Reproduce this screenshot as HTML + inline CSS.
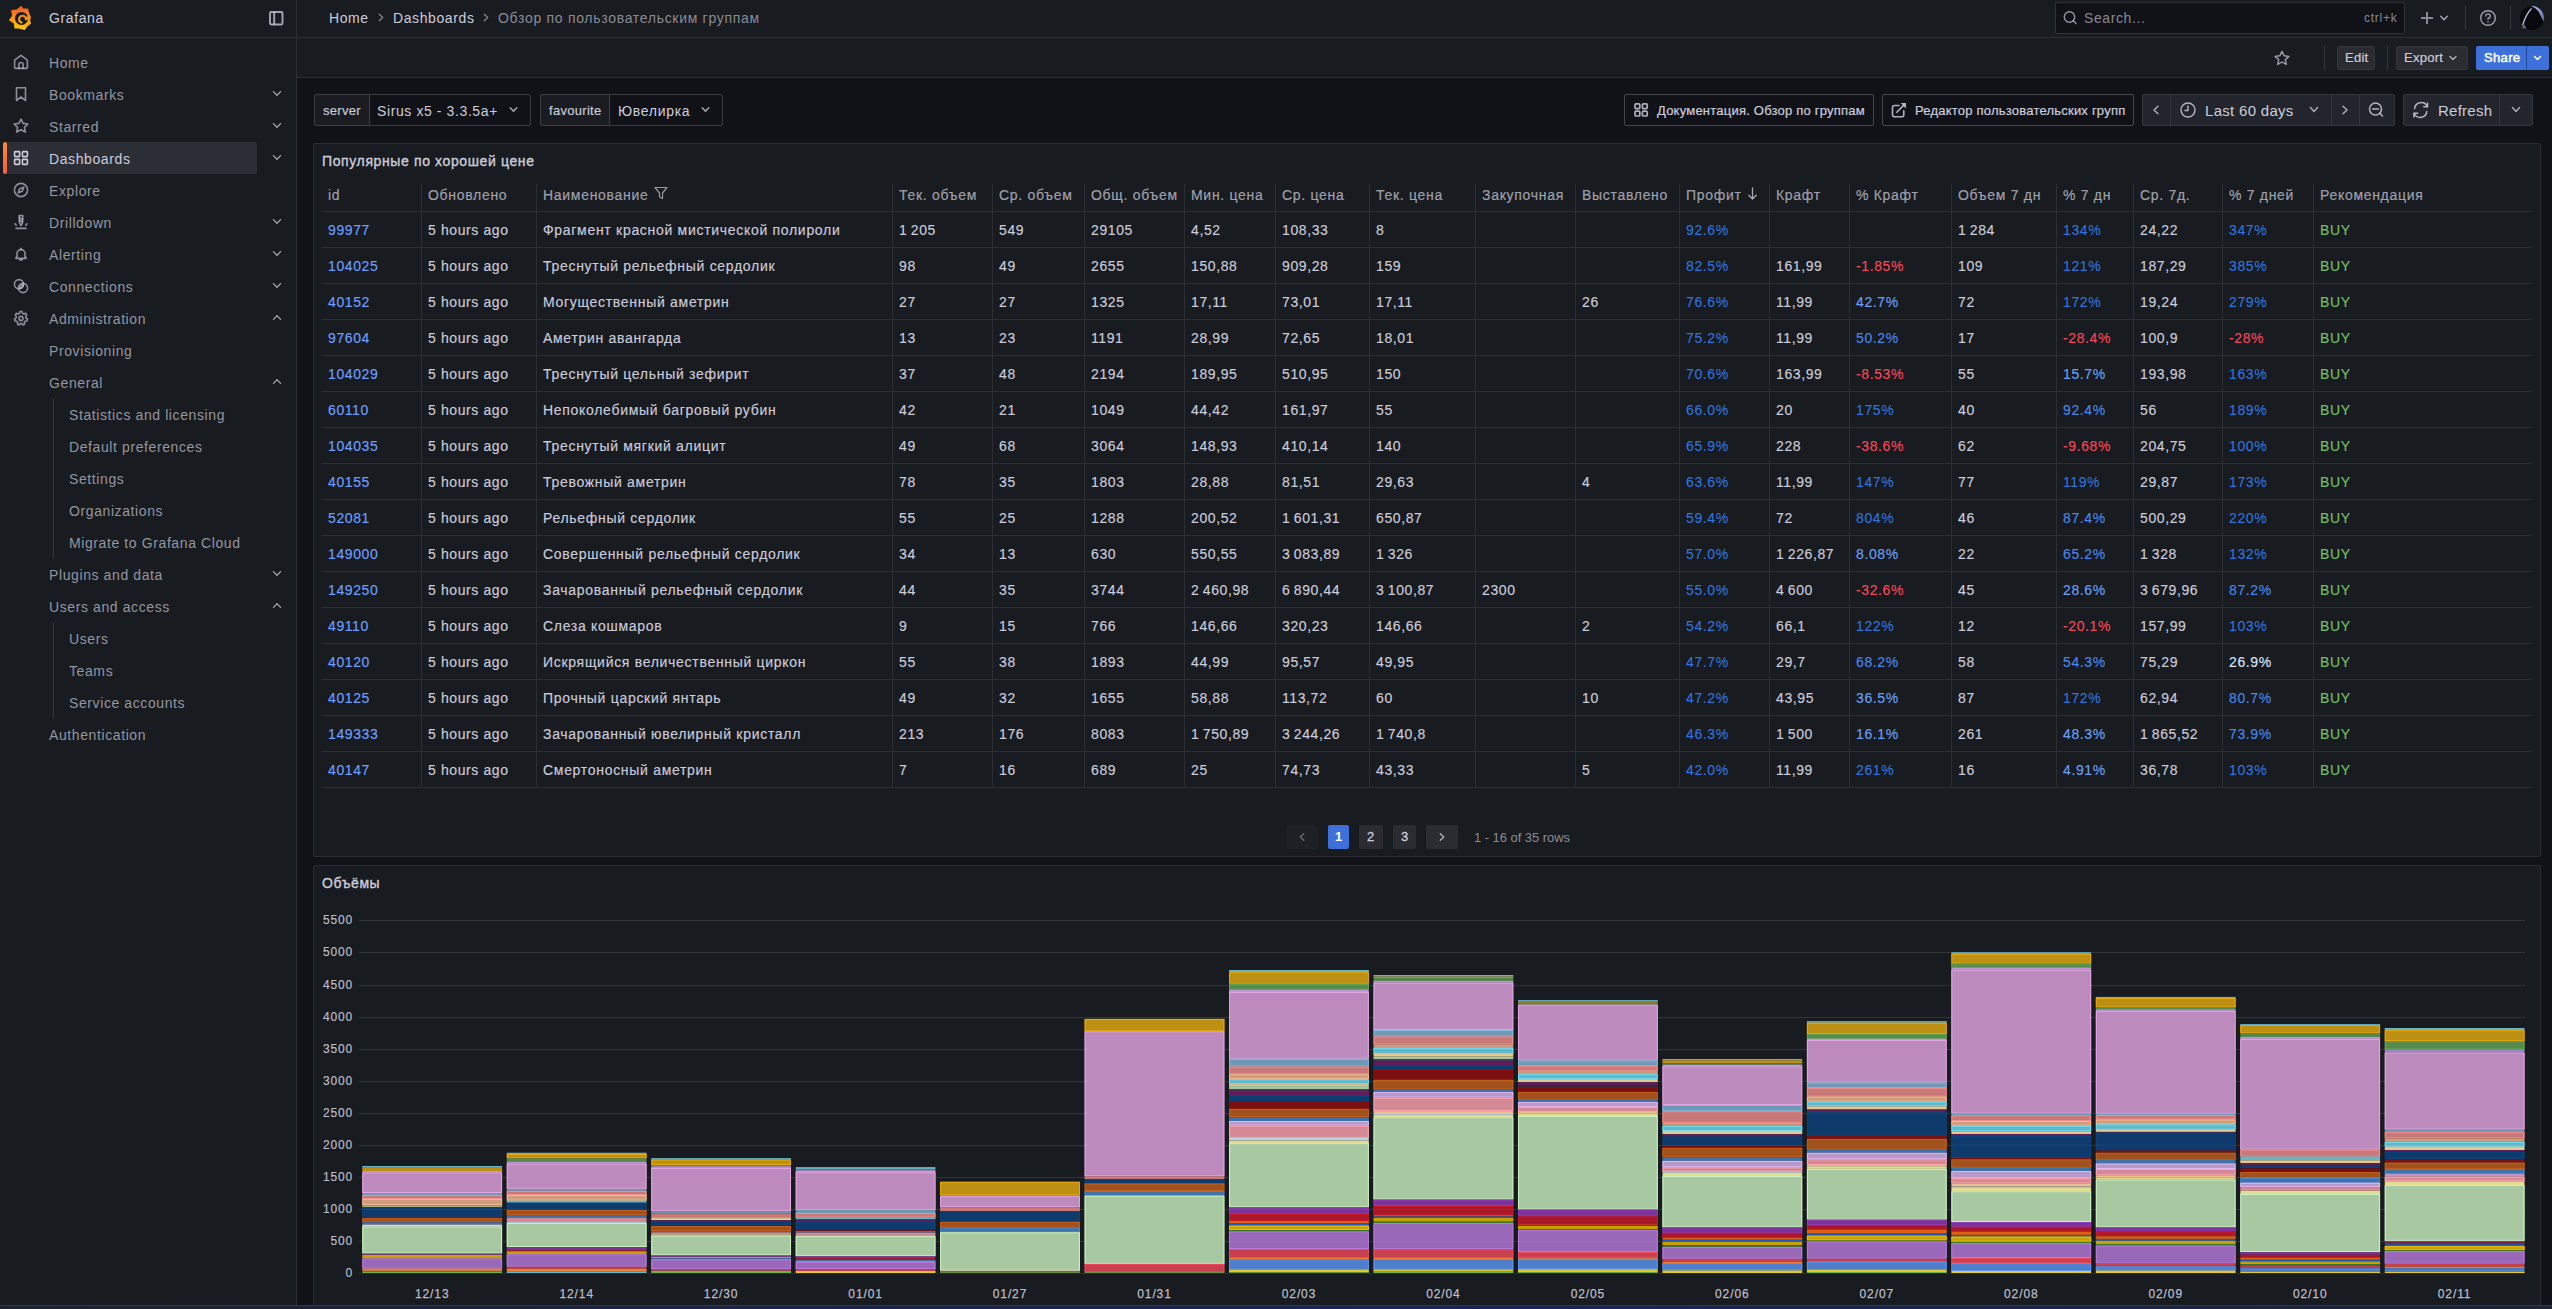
<!DOCTYPE html>
<html><head><meta charset="utf-8"><title>Grafana</title><style>
*{box-sizing:border-box;margin:0;padding:0}
html,body{width:2552px;height:1309px;overflow:hidden;background:#111217;font-family:"Liberation Sans",sans-serif;color:#ccccdc;font-size:14px}
.a{position:absolute;white-space:nowrap}
.t{position:absolute;white-space:nowrap;line-height:16px}
.sec{color:rgba(204,204,220,0.65)}
svg{display:block}
.ls{letter-spacing:0.6px}
.lc{letter-spacing:0.7px}
</style></head>
<body>
<div class="a" style="left:0px;top:0px;width:2552px;height:37px;background:#181b1f"></div><div class="a" style="left:0px;top:37px;width:2552px;height:1px;background:#2c2e33"></div><div class="a" style="left:0px;top:38px;width:296px;height:1268px;background:#181b1f"></div><div class="a" style="left:296px;top:0px;width:1px;height:1306px;background:#2c2e33"></div><div class="a" style="left:297px;top:38px;width:2255px;height:39px;background:#181b1f"></div><div class="a" style="left:297px;top:77px;width:2255px;height:1px;background:#2c2e33"></div><div class="a" style="left:0px;top:1305px;width:2552px;height:1px;background:#2f3238"></div><div class="a" style="left:0px;top:1306px;width:2552px;height:3px;background:linear-gradient(90deg,#1c2230 0%,#1a2446 30%,#182556 60%,#1c2438 100%)"></div><div class="t ls" style="left:329px;top:10px;color:#ccccdc">Home</div><svg class="a" style="left:0;top:0;overflow:visible" width="1" height="1"><path d="M379.25 14.25 L382.75 17.5 L379.25 20.75" fill="none" stroke="rgba(204,204,220,0.6)" stroke-width="1.3" stroke-linecap="round" stroke-linejoin="round"/></svg><div class="t ls" style="left:393px;top:10px;color:#ccccdc">Dashboards</div><svg class="a" style="left:0;top:0;overflow:visible" width="1" height="1"><path d="M484.25 14.25 L487.75 17.5 L484.25 20.75" fill="none" stroke="rgba(204,204,220,0.6)" stroke-width="1.3" stroke-linecap="round" stroke-linejoin="round"/></svg><div class="t lc" style="left:498px;top:10px;color:rgba(204,204,220,0.65)">Обзор по пользовательским группам</div><div class="a" style="left:2055px;top:2px;width:350px;height:32px;background:#111217;border:1px solid #2f3136;border-radius:2px"></div><svg class="a" style="left:0;top:0;overflow:visible" width="1" height="1"><circle cx="2069.5" cy="17" r="5.2" fill="none" stroke="rgba(204,204,220,0.7)" stroke-width="1.4"/><path d="M2073.3 20.8 L2076 23.5" stroke="rgba(204,204,220,0.7)" stroke-width="1.4" stroke-linecap="round"/></svg><div class="t ls" style="left:2084px;top:10px;color:rgba(204,204,220,0.65)">Search...</div><div class="t" style="left:2364px;top:10px;color:rgba(204,204,220,0.65);font-size:12px;letter-spacing:0.75px">ctrl+k</div><svg class="a" style="left:0;top:0;overflow:visible" width="1" height="1"><path d="M2427 12 V24 M2421 18 H2433" stroke="rgba(204,204,220,0.62)" stroke-width="2"/></svg><svg class="a" style="left:0;top:0;overflow:visible" width="1" height="1"><path d="M2440.75 16.25 L2444 19.75 L2447.25 16.25" fill="none" stroke="rgba(204,204,220,0.8)" stroke-width="1.4" stroke-linecap="round" stroke-linejoin="round"/></svg><div class="a" style="left:2465px;top:6px;width:1px;height:24px;background:#34363c"></div><svg class="a" style="left:0;top:0;overflow:visible" width="1" height="1"><circle cx="2488" cy="18" r="7.3" fill="none" stroke="rgba(204,204,220,0.75)" stroke-width="1.4"/><path d="M2485.8 16 A2.2 2.2 0 1 1 2488 18.3 V19.3" fill="none" stroke="rgba(204,204,220,0.75)" stroke-width="1.3" stroke-linecap="round"/><circle cx="2488" cy="21.8" r="0.8" fill="rgba(204,204,220,0.75)"/></svg><div class="a" style="left:2510px;top:6px;width:1px;height:24px;background:#34363c"></div><svg class="a" style="left:0;top:0;overflow:visible" width="1" height="1"><defs><linearGradient id="avg" x1="0" y1="0" x2="1" y2="1"><stop offset="0" stop-color="#c0c4e8"/><stop offset="1" stop-color="#5a62a0"/></linearGradient></defs><circle cx="2532" cy="18" r="12" fill="#08080d"/><path d="M2531 6.1 A12 12 0 0 1 2543.6 21.5 Q2541 17 2538.5 11.5 Q2535.5 7.5 2531 6.1Z" fill="url(#avg)"/><path d="M2522.5 25.5 Q2526 14 2531.5 8.5" fill="none" stroke="#b8bce0" stroke-width="1.3"/><path d="M2522 28 L2524.5 24.5 L2526 28.5Z" fill="#6a70a8"/></svg><svg class="a" style="left:0;top:0;overflow:visible" width="1" height="1"><path d="M2282 51.4 L2284.1 55.8 L2288.9 56.4 L2285.3 59.6 L2286.3 64.4 L2282 62 L2277.7 64.4 L2278.7 59.6 L2275.1 56.4 L2279.9 55.8 Z" fill="none" stroke="rgba(204,204,220,0.75)" stroke-width="1.4" stroke-linejoin="round"/></svg><div class="a" style="left:2324px;top:46px;width:1px;height:24px;background:#34363c"></div><div class="a" style="left:2337px;top:46px;width:38px;height:24px;background:#2a2c31;border:1px solid #34363c;border-radius:2px"></div><div class="t" style="left:2345px;top:50px;color:#ccccdc;font-size:13px;letter-spacing:0.25px;-webkit-text-stroke:0.2px #ccccdc">Edit</div><div class="a" style="left:2387px;top:46px;width:1px;height:24px;background:#34363c"></div><div class="a" style="left:2396px;top:46px;width:72px;height:24px;background:#2a2c31;border:1px solid #34363c;border-radius:2px"></div><div class="t" style="left:2404px;top:50px;color:#ccccdc;font-size:13px;letter-spacing:0.25px;-webkit-text-stroke:0.2px #ccccdc">Export</div><svg class="a" style="left:0;top:0;overflow:visible" width="1" height="1"><path d="M2450.0 56.4 L2453 59.6 L2456.0 56.4" fill="none" stroke="rgba(204,204,220,0.8)" stroke-width="1.4" stroke-linecap="round" stroke-linejoin="round"/></svg><div class="a" style="left:2476px;top:46px;width:73px;height:24px;background:#3d71d9;border-radius:2px"></div><div class="a" style="left:2526px;top:46px;width:1px;height:24px;background:#1d4a9e"></div><div class="t" style="left:2484px;top:50px;color:#ffffff;font-size:13px;letter-spacing:0.35px;-webkit-text-stroke:0.45px #ffffff">Share</div><svg class="a" style="left:0;top:0;overflow:visible" width="1" height="1"><path d="M2534.5 56.4 L2537.5 59.6 L2540.5 56.4" fill="none" stroke="#ffffff" stroke-width="1.4" stroke-linecap="round" stroke-linejoin="round"/></svg><div class="a" style="left:314px;top:94px;width:217px;height:32px;background:#111217;border:1px solid #3c3e44;border-radius:2px"></div><div class="a" style="left:314px;top:94px;width:56px;height:32px;background:#1a1c21;border:1px solid #3c3e44;border-radius:2px 0 0 2px"></div><div class="t" style="left:323px;top:103px;color:#ccccdc;font-size:13px;letter-spacing:0.3px;-webkit-text-stroke:0.15px #ccccdc">server</div><div class="t" style="left:377px;top:103px;color:#ccccdc;font-size:14px;letter-spacing:0.6px">Sirus x5 - 3.3.5a+</div><svg class="a" style="left:0;top:0;overflow:visible" width="1" height="1"><path d="M510.25 107.75 L513.5 111.25 L516.75 107.75" fill="none" stroke="rgba(204,204,220,0.8)" stroke-width="1.4" stroke-linecap="round" stroke-linejoin="round"/></svg><div class="a" style="left:540px;top:94px;width:183px;height:32px;background:#111217;border:1px solid #3c3e44;border-radius:2px"></div><div class="a" style="left:540px;top:94px;width:70px;height:32px;background:#1a1c21;border:1px solid #3c3e44;border-radius:2px 0 0 2px"></div><div class="t" style="left:549px;top:103px;color:#ccccdc;font-size:13px;letter-spacing:0.3px;-webkit-text-stroke:0.15px #ccccdc">favourite</div><div class="t" style="left:618px;top:103px;color:#ccccdc;font-size:14px;letter-spacing:0.7px">Ювелирка</div><svg class="a" style="left:0;top:0;overflow:visible" width="1" height="1"><path d="M702.25 107.75 L705.5 111.25 L708.75 107.75" fill="none" stroke="rgba(204,204,220,0.8)" stroke-width="1.4" stroke-linecap="round" stroke-linejoin="round"/></svg><div class="a" style="left:1624px;top:94px;width:250px;height:32px;background:#111217;border:1px solid #44464c;border-radius:2px"></div><svg class="a" style="left:0;top:0;overflow:visible" width="1" height="1"><g fill="none" stroke="rgba(204,204,220,0.85)" stroke-width="1.7"><rect x="1635" y="103.8" width="4.8" height="4.8" rx="1"/><rect x="1642.4" y="103.8" width="4.8" height="4.8" rx="1"/><rect x="1635" y="111.2" width="4.8" height="4.8" rx="1"/><rect x="1642.4" y="111.2" width="4.8" height="4.8" rx="1"/></g></svg><div class="t" style="left:1657px;top:103px;color:#ccccdc;font-size:13px;letter-spacing:0.22px;-webkit-text-stroke:0.2px #ccccdc">Документация. Обзор по группам</div><div class="a" style="left:1882px;top:94px;width:252px;height:32px;background:#111217;border:1px solid #44464c;border-radius:2px"></div><svg class="a" style="left:0;top:0;overflow:visible" width="1" height="1"><g fill="none" stroke="rgba(204,204,220,0.85)" stroke-width="1.6" stroke-linecap="round" stroke-linejoin="round"><path d="M1899 105.5 H1894.5 Q1892.5 105.5 1892.5 107.5 V114.8 Q1892.5 116.8 1894.5 116.8 H1901.8 Q1903.8 116.8 1903.8 114.8 V110.8"/><path d="M1896.8 112.2 L1903.6 105.4"/></g><path d="M1900.6 103 H1906 V108.4 Z" fill="rgba(204,204,220,0.85)"/></svg><div class="t" style="left:1915px;top:103px;color:#ccccdc;font-size:13px;letter-spacing:0.22px;-webkit-text-stroke:0.2px #ccccdc">Редактор пользовательских групп</div><div class="a" style="left:2142px;top:94px;width:253px;height:32px;background:#22252b;border:1px solid #34363c;border-radius:2px"></div><div class="a" style="left:2170px;top:95px;width:1px;height:30px;background:#34363c"></div><div class="a" style="left:2331px;top:95px;width:1px;height:30px;background:#34363c"></div><div class="a" style="left:2359px;top:95px;width:1px;height:30px;background:#34363c"></div><svg class="a" style="left:0;top:0;overflow:visible" width="1" height="1"><path d="M2158.0 106.25 L2154.0 110 L2158.0 113.75" fill="none" stroke="rgba(204,204,220,0.8)" stroke-width="1.5" stroke-linecap="round" stroke-linejoin="round"/></svg><svg class="a" style="left:0;top:0;overflow:visible" width="1" height="1"><circle cx="2188" cy="110" r="7" fill="none" stroke="rgba(204,204,220,0.85)" stroke-width="1.4"/><path d="M2188 106 V110.5 H2185" fill="none" stroke="rgba(204,204,220,0.85)" stroke-width="1.4" stroke-linecap="round" stroke-linejoin="round"/></svg><div class="t" style="left:2205px;top:103px;color:#ccccdc;font-size:15px;letter-spacing:0.3px">Last 60 days</div><svg class="a" style="left:0;top:0;overflow:visible" width="1" height="1"><path d="M2310.5 107.6 L2314 111.4 L2317.5 107.6" fill="none" stroke="rgba(204,204,220,0.8)" stroke-width="1.5" stroke-linecap="round" stroke-linejoin="round"/></svg><svg class="a" style="left:0;top:0;overflow:visible" width="1" height="1"><path d="M2343.0 106.25 L2347.0 110 L2343.0 113.75" fill="none" stroke="rgba(204,204,220,0.8)" stroke-width="1.5" stroke-linecap="round" stroke-linejoin="round"/></svg><svg class="a" style="left:0;top:0;overflow:visible" width="1" height="1"><circle cx="2375.5" cy="109" r="6" fill="none" stroke="rgba(204,204,220,0.85)" stroke-width="1.5"/><path d="M2379.8 113.3 L2382.5 116 M2372.5 109 H2378.5" stroke="rgba(204,204,220,0.85)" stroke-width="1.5" stroke-linecap="round"/></svg><div class="a" style="left:2403px;top:94px;width:130px;height:32px;background:#22252b;border:1px solid #34363c;border-radius:2px"></div><div class="a" style="left:2499px;top:95px;width:1px;height:30px;background:#34363c"></div><svg class="a" style="left:0;top:0;overflow:visible" width="1" height="1"><g fill="none" stroke="rgba(204,204,220,0.85)" stroke-width="1.5" stroke-linecap="round" stroke-linejoin="round"><path d="M2427.2 106.5 A6.6 6.6 0 0 0 2414.6 108.6"/><path d="M2414.2 113.5 A6.6 6.6 0 0 0 2426.8 111.4"/><path d="M2427.5 103 V106.8 H2423.7"/><path d="M2413.9 117 V113.2 H2417.7"/></g></svg><div class="t" style="left:2438px;top:103px;color:#ccccdc;font-size:15px;letter-spacing:0.25px">Refresh</div><svg class="a" style="left:0;top:0;overflow:visible" width="1" height="1"><path d="M2512.5 107.6 L2516 111.4 L2519.5 107.6" fill="none" stroke="rgba(204,204,220,0.8)" stroke-width="1.5" stroke-linecap="round" stroke-linejoin="round"/></svg><svg class="a" style="left:4px;top:2px" width="32" height="32" viewBox="0 0 32 32">
<defs><linearGradient id="lg" x1="0" y1="4" x2="0" y2="28" gradientUnits="userSpaceOnUse"><stop offset="0" stop-color="#f05a28"/><stop offset="1" stop-color="#fbca0a"/></linearGradient></defs>
<path fill="url(#lg)" d="M17.1 3.7 L19.3 6.6 L24 6.4 L25 10.5 L27 15.2 L26.2 18 L27.1 21.5 L23.2 24.4 L20.8 28.1 L14.7 26.4 L10.5 26.4 L9.8 21.5 L4.9 18.3 L8.1 13.7 L7.1 8.1 L12.7 7.6 Z"/>
<circle cx="17.5" cy="16.4" r="6.5" fill="#181b1f"/>
<path d="M21.9 17.3 A3.4 3.4 0 1 0 17.6 20.4" fill="none" stroke="url(#lg)" stroke-width="2.1" stroke-linecap="round"/>
<path d="M21.6 17.6 Q23.5 17 24.2 14.2" fill="none" stroke="url(#lg)" stroke-width="2.2"/>
</svg><div class="t ls" style="left:49px;top:10px;color:#ccccdc">Grafana</div><svg class="a" style="left:268px;top:10px" width="16" height="16" viewBox="0 0 16 16" fill="none" stroke="rgba(204,204,220,0.78)" stroke-width="1.9"><rect x="2" y="2" width="12.5" height="12.5" rx="1.2"/><path d="M6.2 2 V14.5"/></svg><div class="a" style="left:7px;top:142px;width:250px;height:32px;background:#2b2e34;border-radius:0 2px 2px 0"></div><div class="a" style="left:3px;top:142px;width:4px;height:32px;background:linear-gradient(#ff8833,#f55f3e);border-radius:2px"></div><svg class="a" style="left:13.0px;top:54.0px" width="16" height="16" viewBox="0 0 16 16" fill="none" stroke="rgba(204,204,220,0.65)" stroke-width="1.6" stroke-linecap="round" stroke-linejoin="round"><path d="M1.6 13.4 V6.9 Q1.6 6.2 2.2 5.7 L8 1.3 L13.8 5.7 Q14.4 6.2 14.4 6.9 V13.4 Q14.4 14.4 13.4 14.4 H2.6 Q1.6 14.4 1.6 13.4 Z"/><path d="M5.9 14.4 V10.6 A2.1 2.1 0 0 1 10.1 10.6 V14.4"/></svg><div class="t ls" style="left:49px;top:55px;color:rgba(204,204,220,0.70)">Home</div><svg class="a" style="left:13.0px;top:86.0px" width="16" height="16" viewBox="0 0 16 16" fill="none" stroke="rgba(204,204,220,0.65)" stroke-width="1.6" stroke-linecap="round" stroke-linejoin="round"><path d="M3.5 1.8 H12.5 V14.5 L8 11 L3.5 14.5 Z"/></svg><div class="t ls" style="left:49px;top:87px;color:rgba(204,204,220,0.70)">Bookmarks</div><svg class="a" style="left:0;top:0;overflow:visible" width="1" height="1"><path d="M273.5 91.6 L277 95.4 L280.5 91.6" fill="none" stroke="rgba(204,204,220,0.8)" stroke-width="1.3" stroke-linecap="round" stroke-linejoin="round"/></svg><svg class="a" style="left:13.0px;top:118.0px" width="16" height="16" viewBox="0 0 16 16" fill="none" stroke="rgba(204,204,220,0.65)" stroke-width="1.6" stroke-linecap="round" stroke-linejoin="round"><path d="M8 1.1 L10.1 5.4 L14.9 6 L11.4 9.3 L12.3 14 L8 11.7 L3.7 14 L4.6 9.3 L1.1 6 L5.9 5.4 Z"/></svg><div class="t ls" style="left:49px;top:119px;color:rgba(204,204,220,0.70)">Starred</div><svg class="a" style="left:0;top:0;overflow:visible" width="1" height="1"><path d="M273.5 123.6 L277 127.4 L280.5 123.6" fill="none" stroke="rgba(204,204,220,0.8)" stroke-width="1.3" stroke-linecap="round" stroke-linejoin="round"/></svg><svg class="a" style="left:13.0px;top:150.0px" width="16" height="16" viewBox="0 0 16 16" fill="none" stroke="#ccccdc" stroke-width="1.6" stroke-linecap="round" stroke-linejoin="round"><rect x="1.6" y="1.6" width="5" height="5" rx="0.6"/><rect x="9.4" y="1.6" width="5" height="5" rx="0.6"/><rect x="1.6" y="9.4" width="5" height="5" rx="0.6"/><rect x="9.4" y="9.4" width="5" height="5" rx="0.6"/></svg><div class="t ls" style="left:49px;top:151px;color:#ccccdc">Dashboards</div><svg class="a" style="left:0;top:0;overflow:visible" width="1" height="1"><path d="M273.5 155.6 L277 159.4 L280.5 155.6" fill="none" stroke="rgba(204,204,220,0.8)" stroke-width="1.3" stroke-linecap="round" stroke-linejoin="round"/></svg><svg class="a" style="left:13.0px;top:182.0px" width="16" height="16" viewBox="0 0 16 16" fill="none" stroke="rgba(204,204,220,0.65)" stroke-width="1.6" stroke-linecap="round" stroke-linejoin="round"><circle cx="8" cy="8" r="6.6"/><path d="M10.8 5.2 L9.2 9.2 L5.2 10.8 L6.8 6.8 Z"/></svg><div class="t ls" style="left:49px;top:183px;color:rgba(204,204,220,0.70)">Explore</div><svg class="a" style="left:13.0px;top:214.0px" width="16" height="16" viewBox="0 0 16 16" fill="none" stroke="rgba(204,204,220,0.65)" stroke-width="1.6" stroke-linecap="round" stroke-linejoin="round"><path d="M6.2 1.6 H9.8 L9.4 9 L8 11.6 L6.6 9 Z"/><path d="M6.3 4 L9.7 5.2 M6.4 6.6 L9.6 7.8"/><path d="M2.2 9.8 L3.2 11.4 M13.8 9.8 L12.8 11.4 M3 14.4 H13"/></svg><div class="t ls" style="left:49px;top:215px;color:rgba(204,204,220,0.70)">Drilldown</div><svg class="a" style="left:0;top:0;overflow:visible" width="1" height="1"><path d="M273.5 219.6 L277 223.4 L280.5 219.6" fill="none" stroke="rgba(204,204,220,0.8)" stroke-width="1.3" stroke-linecap="round" stroke-linejoin="round"/></svg><svg class="a" style="left:13.0px;top:246.0px" width="16" height="16" viewBox="0 0 16 16" fill="none" stroke="rgba(204,204,220,0.65)" stroke-width="1.6" stroke-linecap="round" stroke-linejoin="round"><path d="M4 11.2 V7.6 A4 4 0 0 1 12 7.6 V11.2 H13 V12.4 H3 V11.2 Z"/><path d="M6.7 13.4 A1.4 1.4 0 0 0 9.3 13.4"/><path d="M8 2.4 V3.4"/></svg><div class="t ls" style="left:49px;top:247px;color:rgba(204,204,220,0.70)">Alerting</div><svg class="a" style="left:0;top:0;overflow:visible" width="1" height="1"><path d="M273.5 251.6 L277 255.4 L280.5 251.6" fill="none" stroke="rgba(204,204,220,0.8)" stroke-width="1.3" stroke-linecap="round" stroke-linejoin="round"/></svg><svg class="a" style="left:13.0px;top:278.0px" width="16" height="16" viewBox="0 0 16 16" fill="none" stroke="rgba(204,204,220,0.65)" stroke-width="1.6" stroke-linecap="round" stroke-linejoin="round"><circle cx="6" cy="6.2" r="4.6"/><circle cx="10" cy="10" r="4.6"/><path d="M6.3 9.3 L9.3 6.3 M7.6 10.4 L10.4 7.6"/></svg><div class="t ls" style="left:49px;top:279px;color:rgba(204,204,220,0.70)">Connections</div><svg class="a" style="left:0;top:0;overflow:visible" width="1" height="1"><path d="M273.5 283.6 L277 287.4 L280.5 283.6" fill="none" stroke="rgba(204,204,220,0.8)" stroke-width="1.3" stroke-linecap="round" stroke-linejoin="round"/></svg><svg class="a" style="left:13.0px;top:310.0px" width="16" height="16" viewBox="0 0 16 16" fill="none" stroke="rgba(204,204,220,0.65)" stroke-width="1.6" stroke-linecap="round" stroke-linejoin="round"><path d="M6.9 1.5 H9.1 L9.5 3.3 L10.9 4 L12.6 3.2 L13.8 4.9 L12.7 6.4 L12.9 8 L14.5 9 L13.9 11 L12.1 11.2 L11.2 12.4 L11.6 14.2 L9.6 14.9 L8.6 13.4 H7.4 L6.4 14.9 L4.4 14.2 L4.8 12.4 L3.9 11.2 L2.1 11 L1.5 9 L3.1 8 L3.3 6.4 L2.2 4.9 L3.4 3.2 L5.1 4 L6.5 3.3 Z"/><circle cx="8" cy="8.4" r="2"/></svg><div class="t ls" style="left:49px;top:311px;color:rgba(204,204,220,0.70)">Administration</div><svg class="a" style="left:0;top:0;overflow:visible" width="1" height="1"><path d="M273.5 319.4 L277 315.6 L280.5 319.4" fill="none" stroke="rgba(204,204,220,0.8)" stroke-width="1.3" stroke-linecap="round" stroke-linejoin="round"/></svg><div class="t ls" style="left:49px;top:343px;color:rgba(204,204,220,0.70)">Provisioning</div><div class="t ls" style="left:49px;top:375px;color:rgba(204,204,220,0.70)">General</div><svg class="a" style="left:0;top:0;overflow:visible" width="1" height="1"><path d="M273.5 383.4 L277 379.6 L280.5 383.4" fill="none" stroke="rgba(204,204,220,0.8)" stroke-width="1.3" stroke-linecap="round" stroke-linejoin="round"/></svg><div class="t ls" style="left:69px;top:407px;color:rgba(204,204,220,0.70)">Statistics and licensing</div><div class="t ls" style="left:69px;top:439px;color:rgba(204,204,220,0.70)">Default preferences</div><div class="t ls" style="left:69px;top:471px;color:rgba(204,204,220,0.70)">Settings</div><div class="t ls" style="left:69px;top:503px;color:rgba(204,204,220,0.70)">Organizations</div><div class="t ls" style="left:69px;top:535px;color:rgba(204,204,220,0.70)">Migrate to Grafana Cloud</div><div class="t ls" style="left:49px;top:567px;color:rgba(204,204,220,0.70)">Plugins and data</div><svg class="a" style="left:0;top:0;overflow:visible" width="1" height="1"><path d="M273.5 571.6 L277 575.4 L280.5 571.6" fill="none" stroke="rgba(204,204,220,0.8)" stroke-width="1.3" stroke-linecap="round" stroke-linejoin="round"/></svg><div class="t ls" style="left:49px;top:599px;color:rgba(204,204,220,0.70)">Users and access</div><svg class="a" style="left:0;top:0;overflow:visible" width="1" height="1"><path d="M273.5 607.4 L277 603.6 L280.5 607.4" fill="none" stroke="rgba(204,204,220,0.8)" stroke-width="1.3" stroke-linecap="round" stroke-linejoin="round"/></svg><div class="t ls" style="left:69px;top:631px;color:rgba(204,204,220,0.70)">Users</div><div class="t ls" style="left:69px;top:663px;color:rgba(204,204,220,0.70)">Teams</div><div class="t ls" style="left:69px;top:695px;color:rgba(204,204,220,0.70)">Service accounts</div><div class="t ls" style="left:49px;top:727px;color:rgba(204,204,220,0.70)">Authentication</div><div class="a" style="left:53px;top:398px;width:1px;height:160px;background:#34363c"></div><div class="a" style="left:53px;top:622px;width:1px;height:96px;background:#34363c"></div><div class="a" style="left:313px;top:143px;width:2228px;height:714px;background:#181b1f;border:1px solid #2c2e33;border-radius:2px"></div><div class="t" style="left:322px;top:153px;color:#ccccdc;font-size:14px;letter-spacing:0.62px;-webkit-text-stroke:0.35px #ccccdc">Популярные по хорошей цене</div><div class="a" style="left:421px;top:184px;width:1px;height:604px;background:#2c2e33"></div><div class="a" style="left:536px;top:184px;width:1px;height:604px;background:#2c2e33"></div><div class="a" style="left:892px;top:184px;width:1px;height:604px;background:#2c2e33"></div><div class="a" style="left:992px;top:184px;width:1px;height:604px;background:#2c2e33"></div><div class="a" style="left:1084px;top:184px;width:1px;height:604px;background:#2c2e33"></div><div class="a" style="left:1184px;top:184px;width:1px;height:604px;background:#2c2e33"></div><div class="a" style="left:1275px;top:184px;width:1px;height:604px;background:#2c2e33"></div><div class="a" style="left:1369px;top:184px;width:1px;height:604px;background:#2c2e33"></div><div class="a" style="left:1475px;top:184px;width:1px;height:604px;background:#2c2e33"></div><div class="a" style="left:1575px;top:184px;width:1px;height:604px;background:#2c2e33"></div><div class="a" style="left:1679px;top:184px;width:1px;height:604px;background:#2c2e33"></div><div class="a" style="left:1769px;top:184px;width:1px;height:604px;background:#2c2e33"></div><div class="a" style="left:1849px;top:184px;width:1px;height:604px;background:#2c2e33"></div><div class="a" style="left:1951px;top:184px;width:1px;height:604px;background:#2c2e33"></div><div class="a" style="left:2056px;top:184px;width:1px;height:604px;background:#2c2e33"></div><div class="a" style="left:2133px;top:184px;width:1px;height:604px;background:#2c2e33"></div><div class="a" style="left:2222px;top:184px;width:1px;height:604px;background:#2c2e33"></div><div class="a" style="left:2313px;top:184px;width:1px;height:604px;background:#2c2e33"></div><div class="a" style="left:322px;top:211px;width:2210px;height:1px;background:#2c2e33"></div><div class="a" style="left:322px;top:247px;width:2210px;height:1px;background:#2c2e33"></div><div class="a" style="left:322px;top:283px;width:2210px;height:1px;background:#2c2e33"></div><div class="a" style="left:322px;top:319px;width:2210px;height:1px;background:#2c2e33"></div><div class="a" style="left:322px;top:355px;width:2210px;height:1px;background:#2c2e33"></div><div class="a" style="left:322px;top:391px;width:2210px;height:1px;background:#2c2e33"></div><div class="a" style="left:322px;top:427px;width:2210px;height:1px;background:#2c2e33"></div><div class="a" style="left:322px;top:463px;width:2210px;height:1px;background:#2c2e33"></div><div class="a" style="left:322px;top:499px;width:2210px;height:1px;background:#2c2e33"></div><div class="a" style="left:322px;top:535px;width:2210px;height:1px;background:#2c2e33"></div><div class="a" style="left:322px;top:571px;width:2210px;height:1px;background:#2c2e33"></div><div class="a" style="left:322px;top:607px;width:2210px;height:1px;background:#2c2e33"></div><div class="a" style="left:322px;top:643px;width:2210px;height:1px;background:#2c2e33"></div><div class="a" style="left:322px;top:679px;width:2210px;height:1px;background:#2c2e33"></div><div class="a" style="left:322px;top:715px;width:2210px;height:1px;background:#2c2e33"></div><div class="a" style="left:322px;top:751px;width:2210px;height:1px;background:#2c2e33"></div><div class="a" style="left:322px;top:787px;width:2210px;height:1px;background:#2c2e33"></div><div class="t lc" style="left:328px;top:187px;color:rgba(204,204,220,0.72);-webkit-text-stroke:0.22px rgba(204,204,220,0.72)">id</div><div class="t lc" style="left:428px;top:187px;color:rgba(204,204,220,0.72);-webkit-text-stroke:0.22px rgba(204,204,220,0.72)">Обновлено</div><div class="t lc" style="left:543px;top:187px;color:rgba(204,204,220,0.72);-webkit-text-stroke:0.22px rgba(204,204,220,0.72)">Наименование</div><div class="t lc" style="left:899px;top:187px;color:rgba(204,204,220,0.72);-webkit-text-stroke:0.22px rgba(204,204,220,0.72)">Тек. объем</div><div class="t lc" style="left:999px;top:187px;color:rgba(204,204,220,0.72);-webkit-text-stroke:0.22px rgba(204,204,220,0.72)">Ср. объем</div><div class="t lc" style="left:1091px;top:187px;color:rgba(204,204,220,0.72);-webkit-text-stroke:0.22px rgba(204,204,220,0.72)">Общ. объем</div><div class="t lc" style="left:1191px;top:187px;color:rgba(204,204,220,0.72);-webkit-text-stroke:0.22px rgba(204,204,220,0.72)">Мин. цена</div><div class="t lc" style="left:1282px;top:187px;color:rgba(204,204,220,0.72);-webkit-text-stroke:0.22px rgba(204,204,220,0.72)">Ср. цена</div><div class="t lc" style="left:1376px;top:187px;color:rgba(204,204,220,0.72);-webkit-text-stroke:0.22px rgba(204,204,220,0.72)">Тек. цена</div><div class="t lc" style="left:1482px;top:187px;color:rgba(204,204,220,0.72);-webkit-text-stroke:0.22px rgba(204,204,220,0.72)">Закупочная</div><div class="t lc" style="left:1582px;top:187px;color:rgba(204,204,220,0.72);-webkit-text-stroke:0.22px rgba(204,204,220,0.72)">Выставлено</div><div class="t lc" style="left:1686px;top:187px;color:rgba(204,204,220,0.72);-webkit-text-stroke:0.22px rgba(204,204,220,0.72)">Профит</div><div class="t lc" style="left:1776px;top:187px;color:rgba(204,204,220,0.72);-webkit-text-stroke:0.22px rgba(204,204,220,0.72)">Крафт</div><div class="t lc" style="left:1856px;top:187px;color:rgba(204,204,220,0.72);-webkit-text-stroke:0.22px rgba(204,204,220,0.72)">% Крафт</div><div class="t lc" style="left:1958px;top:187px;color:rgba(204,204,220,0.72);-webkit-text-stroke:0.22px rgba(204,204,220,0.72)">Объем 7 дн</div><div class="t lc" style="left:2063px;top:187px;color:rgba(204,204,220,0.72);-webkit-text-stroke:0.22px rgba(204,204,220,0.72)">% 7 дн</div><div class="t lc" style="left:2140px;top:187px;color:rgba(204,204,220,0.72);-webkit-text-stroke:0.22px rgba(204,204,220,0.72)">Ср. 7д.</div><div class="t lc" style="left:2229px;top:187px;color:rgba(204,204,220,0.72);-webkit-text-stroke:0.22px rgba(204,204,220,0.72)">% 7 дней</div><div class="t lc" style="left:2320px;top:187px;color:rgba(204,204,220,0.72);-webkit-text-stroke:0.22px rgba(204,204,220,0.72)">Рекомендация</div><svg class="a" style="left:0;top:0;overflow:visible" width="1" height="1"><path d="M655 187.5 H667 L662.5 193 V198.5 L659.5 197 V193 Z" fill="none" stroke="rgba(204,204,220,0.7)" stroke-width="1.2" stroke-linejoin="round"/></svg><svg class="a" style="left:0;top:0;overflow:visible" width="1" height="1"><path d="M1752.5 188 V199 M1748.8 195.3 L1752.5 199 L1756.2 195.3" fill="none" stroke="rgba(204,204,220,0.8)" stroke-width="1.3" stroke-linecap="round" stroke-linejoin="round"/></svg><div class="t ls" style="left:328px;top:222px;color:#6e9fff;-webkit-text-stroke:0.15px #6e9fff">99977</div><div class="t ls" style="left:428px;top:222px;color:#ccccdc;-webkit-text-stroke:0.15px #ccccdc">5 hours ago</div><div class="t lc" style="left:543px;top:222px;color:#ccccdc;-webkit-text-stroke:0.15px #ccccdc">Фрагмент красной мистической полироли</div><div class="t ls" style="left:899px;top:222px;color:#ccccdc;-webkit-text-stroke:0.15px #ccccdc">1 205</div><div class="t ls" style="left:999px;top:222px;color:#ccccdc;-webkit-text-stroke:0.15px #ccccdc">549</div><div class="t ls" style="left:1091px;top:222px;color:#ccccdc;-webkit-text-stroke:0.15px #ccccdc">29105</div><div class="t ls" style="left:1191px;top:222px;color:#ccccdc;-webkit-text-stroke:0.15px #ccccdc">4,52</div><div class="t ls" style="left:1282px;top:222px;color:#ccccdc;-webkit-text-stroke:0.15px #ccccdc">108,33</div><div class="t ls" style="left:1376px;top:222px;color:#ccccdc;-webkit-text-stroke:0.15px #ccccdc">8</div><div class="t ls" style="left:1686px;top:222px;color:#3272da;-webkit-text-stroke:0.15px #3272da">92.6%</div><div class="t ls" style="left:1958px;top:222px;color:#ccccdc;-webkit-text-stroke:0.15px #ccccdc">1 284</div><div class="t ls" style="left:2063px;top:222px;color:#3272da;-webkit-text-stroke:0.15px #3272da">134%</div><div class="t ls" style="left:2140px;top:222px;color:#ccccdc;-webkit-text-stroke:0.15px #ccccdc">24,22</div><div class="t ls" style="left:2229px;top:222px;color:#3272da;-webkit-text-stroke:0.15px #3272da">347%</div><div class="t ls" style="left:2320px;top:222px;color:#73bf69;-webkit-text-stroke:0.15px #73bf69">BUY</div><div class="t ls" style="left:328px;top:258px;color:#6e9fff;-webkit-text-stroke:0.15px #6e9fff">104025</div><div class="t ls" style="left:428px;top:258px;color:#ccccdc;-webkit-text-stroke:0.15px #ccccdc">5 hours ago</div><div class="t lc" style="left:543px;top:258px;color:#ccccdc;-webkit-text-stroke:0.15px #ccccdc">Треснутый рельефный сердолик</div><div class="t ls" style="left:899px;top:258px;color:#ccccdc;-webkit-text-stroke:0.15px #ccccdc">98</div><div class="t ls" style="left:999px;top:258px;color:#ccccdc;-webkit-text-stroke:0.15px #ccccdc">49</div><div class="t ls" style="left:1091px;top:258px;color:#ccccdc;-webkit-text-stroke:0.15px #ccccdc">2655</div><div class="t ls" style="left:1191px;top:258px;color:#ccccdc;-webkit-text-stroke:0.15px #ccccdc">150,88</div><div class="t ls" style="left:1282px;top:258px;color:#ccccdc;-webkit-text-stroke:0.15px #ccccdc">909,28</div><div class="t ls" style="left:1376px;top:258px;color:#ccccdc;-webkit-text-stroke:0.15px #ccccdc">159</div><div class="t ls" style="left:1686px;top:258px;color:#3272da;-webkit-text-stroke:0.15px #3272da">82.5%</div><div class="t ls" style="left:1776px;top:258px;color:#ccccdc;-webkit-text-stroke:0.15px #ccccdc">161,99</div><div class="t ls" style="left:1856px;top:258px;color:#f2495c;-webkit-text-stroke:0.15px #f2495c">-1.85%</div><div class="t ls" style="left:1958px;top:258px;color:#ccccdc;-webkit-text-stroke:0.15px #ccccdc">109</div><div class="t ls" style="left:2063px;top:258px;color:#3272da;-webkit-text-stroke:0.15px #3272da">121%</div><div class="t ls" style="left:2140px;top:258px;color:#ccccdc;-webkit-text-stroke:0.15px #ccccdc">187,29</div><div class="t ls" style="left:2229px;top:258px;color:#3272da;-webkit-text-stroke:0.15px #3272da">385%</div><div class="t ls" style="left:2320px;top:258px;color:#73bf69;-webkit-text-stroke:0.15px #73bf69">BUY</div><div class="t ls" style="left:328px;top:294px;color:#6e9fff;-webkit-text-stroke:0.15px #6e9fff">40152</div><div class="t ls" style="left:428px;top:294px;color:#ccccdc;-webkit-text-stroke:0.15px #ccccdc">5 hours ago</div><div class="t lc" style="left:543px;top:294px;color:#ccccdc;-webkit-text-stroke:0.15px #ccccdc">Могущественный аметрин</div><div class="t ls" style="left:899px;top:294px;color:#ccccdc;-webkit-text-stroke:0.15px #ccccdc">27</div><div class="t ls" style="left:999px;top:294px;color:#ccccdc;-webkit-text-stroke:0.15px #ccccdc">27</div><div class="t ls" style="left:1091px;top:294px;color:#ccccdc;-webkit-text-stroke:0.15px #ccccdc">1325</div><div class="t ls" style="left:1191px;top:294px;color:#ccccdc;-webkit-text-stroke:0.15px #ccccdc">17,11</div><div class="t ls" style="left:1282px;top:294px;color:#ccccdc;-webkit-text-stroke:0.15px #ccccdc">73,01</div><div class="t ls" style="left:1376px;top:294px;color:#ccccdc;-webkit-text-stroke:0.15px #ccccdc">17,11</div><div class="t ls" style="left:1582px;top:294px;color:#ccccdc;-webkit-text-stroke:0.15px #ccccdc">26</div><div class="t ls" style="left:1686px;top:294px;color:#3272da;-webkit-text-stroke:0.15px #3272da">76.6%</div><div class="t ls" style="left:1776px;top:294px;color:#ccccdc;-webkit-text-stroke:0.15px #ccccdc">11,99</div><div class="t ls" style="left:1856px;top:294px;color:#6ba0f5;-webkit-text-stroke:0.15px #6ba0f5">42.7%</div><div class="t ls" style="left:1958px;top:294px;color:#ccccdc;-webkit-text-stroke:0.15px #ccccdc">72</div><div class="t ls" style="left:2063px;top:294px;color:#3272da;-webkit-text-stroke:0.15px #3272da">172%</div><div class="t ls" style="left:2140px;top:294px;color:#ccccdc;-webkit-text-stroke:0.15px #ccccdc">19,24</div><div class="t ls" style="left:2229px;top:294px;color:#3272da;-webkit-text-stroke:0.15px #3272da">279%</div><div class="t ls" style="left:2320px;top:294px;color:#73bf69;-webkit-text-stroke:0.15px #73bf69">BUY</div><div class="t ls" style="left:328px;top:330px;color:#6e9fff;-webkit-text-stroke:0.15px #6e9fff">97604</div><div class="t ls" style="left:428px;top:330px;color:#ccccdc;-webkit-text-stroke:0.15px #ccccdc">5 hours ago</div><div class="t lc" style="left:543px;top:330px;color:#ccccdc;-webkit-text-stroke:0.15px #ccccdc">Аметрин авангарда</div><div class="t ls" style="left:899px;top:330px;color:#ccccdc;-webkit-text-stroke:0.15px #ccccdc">13</div><div class="t ls" style="left:999px;top:330px;color:#ccccdc;-webkit-text-stroke:0.15px #ccccdc">23</div><div class="t ls" style="left:1091px;top:330px;color:#ccccdc;-webkit-text-stroke:0.15px #ccccdc">1191</div><div class="t ls" style="left:1191px;top:330px;color:#ccccdc;-webkit-text-stroke:0.15px #ccccdc">28,99</div><div class="t ls" style="left:1282px;top:330px;color:#ccccdc;-webkit-text-stroke:0.15px #ccccdc">72,65</div><div class="t ls" style="left:1376px;top:330px;color:#ccccdc;-webkit-text-stroke:0.15px #ccccdc">18,01</div><div class="t ls" style="left:1686px;top:330px;color:#3272da;-webkit-text-stroke:0.15px #3272da">75.2%</div><div class="t ls" style="left:1776px;top:330px;color:#ccccdc;-webkit-text-stroke:0.15px #ccccdc">11,99</div><div class="t ls" style="left:1856px;top:330px;color:#4a86ea;-webkit-text-stroke:0.15px #4a86ea">50.2%</div><div class="t ls" style="left:1958px;top:330px;color:#ccccdc;-webkit-text-stroke:0.15px #ccccdc">17</div><div class="t ls" style="left:2063px;top:330px;color:#f2495c;-webkit-text-stroke:0.15px #f2495c">-28.4%</div><div class="t ls" style="left:2140px;top:330px;color:#ccccdc;-webkit-text-stroke:0.15px #ccccdc">100,9</div><div class="t ls" style="left:2229px;top:330px;color:#f2495c;-webkit-text-stroke:0.15px #f2495c">-28%</div><div class="t ls" style="left:2320px;top:330px;color:#73bf69;-webkit-text-stroke:0.15px #73bf69">BUY</div><div class="t ls" style="left:328px;top:366px;color:#6e9fff;-webkit-text-stroke:0.15px #6e9fff">104029</div><div class="t ls" style="left:428px;top:366px;color:#ccccdc;-webkit-text-stroke:0.15px #ccccdc">5 hours ago</div><div class="t lc" style="left:543px;top:366px;color:#ccccdc;-webkit-text-stroke:0.15px #ccccdc">Треснутый цельный зефирит</div><div class="t ls" style="left:899px;top:366px;color:#ccccdc;-webkit-text-stroke:0.15px #ccccdc">37</div><div class="t ls" style="left:999px;top:366px;color:#ccccdc;-webkit-text-stroke:0.15px #ccccdc">48</div><div class="t ls" style="left:1091px;top:366px;color:#ccccdc;-webkit-text-stroke:0.15px #ccccdc">2194</div><div class="t ls" style="left:1191px;top:366px;color:#ccccdc;-webkit-text-stroke:0.15px #ccccdc">189,95</div><div class="t ls" style="left:1282px;top:366px;color:#ccccdc;-webkit-text-stroke:0.15px #ccccdc">510,95</div><div class="t ls" style="left:1376px;top:366px;color:#ccccdc;-webkit-text-stroke:0.15px #ccccdc">150</div><div class="t ls" style="left:1686px;top:366px;color:#3272da;-webkit-text-stroke:0.15px #3272da">70.6%</div><div class="t ls" style="left:1776px;top:366px;color:#ccccdc;-webkit-text-stroke:0.15px #ccccdc">163,99</div><div class="t ls" style="left:1856px;top:366px;color:#f2495c;-webkit-text-stroke:0.15px #f2495c">-8.53%</div><div class="t ls" style="left:1958px;top:366px;color:#ccccdc;-webkit-text-stroke:0.15px #ccccdc">55</div><div class="t ls" style="left:2063px;top:366px;color:#6ba0f5;-webkit-text-stroke:0.15px #6ba0f5">15.7%</div><div class="t ls" style="left:2140px;top:366px;color:#ccccdc;-webkit-text-stroke:0.15px #ccccdc">193,98</div><div class="t ls" style="left:2229px;top:366px;color:#3272da;-webkit-text-stroke:0.15px #3272da">163%</div><div class="t ls" style="left:2320px;top:366px;color:#73bf69;-webkit-text-stroke:0.15px #73bf69">BUY</div><div class="t ls" style="left:328px;top:402px;color:#6e9fff;-webkit-text-stroke:0.15px #6e9fff">60110</div><div class="t ls" style="left:428px;top:402px;color:#ccccdc;-webkit-text-stroke:0.15px #ccccdc">5 hours ago</div><div class="t lc" style="left:543px;top:402px;color:#ccccdc;-webkit-text-stroke:0.15px #ccccdc">Непоколебимый багровый рубин</div><div class="t ls" style="left:899px;top:402px;color:#ccccdc;-webkit-text-stroke:0.15px #ccccdc">42</div><div class="t ls" style="left:999px;top:402px;color:#ccccdc;-webkit-text-stroke:0.15px #ccccdc">21</div><div class="t ls" style="left:1091px;top:402px;color:#ccccdc;-webkit-text-stroke:0.15px #ccccdc">1049</div><div class="t ls" style="left:1191px;top:402px;color:#ccccdc;-webkit-text-stroke:0.15px #ccccdc">44,42</div><div class="t ls" style="left:1282px;top:402px;color:#ccccdc;-webkit-text-stroke:0.15px #ccccdc">161,97</div><div class="t ls" style="left:1376px;top:402px;color:#ccccdc;-webkit-text-stroke:0.15px #ccccdc">55</div><div class="t ls" style="left:1686px;top:402px;color:#3272da;-webkit-text-stroke:0.15px #3272da">66.0%</div><div class="t ls" style="left:1776px;top:402px;color:#ccccdc;-webkit-text-stroke:0.15px #ccccdc">20</div><div class="t ls" style="left:1856px;top:402px;color:#3272da;-webkit-text-stroke:0.15px #3272da">175%</div><div class="t ls" style="left:1958px;top:402px;color:#ccccdc;-webkit-text-stroke:0.15px #ccccdc">40</div><div class="t ls" style="left:2063px;top:402px;color:#4a86ea;-webkit-text-stroke:0.15px #4a86ea">92.4%</div><div class="t ls" style="left:2140px;top:402px;color:#ccccdc;-webkit-text-stroke:0.15px #ccccdc">56</div><div class="t ls" style="left:2229px;top:402px;color:#3272da;-webkit-text-stroke:0.15px #3272da">189%</div><div class="t ls" style="left:2320px;top:402px;color:#73bf69;-webkit-text-stroke:0.15px #73bf69">BUY</div><div class="t ls" style="left:328px;top:438px;color:#6e9fff;-webkit-text-stroke:0.15px #6e9fff">104035</div><div class="t ls" style="left:428px;top:438px;color:#ccccdc;-webkit-text-stroke:0.15px #ccccdc">5 hours ago</div><div class="t lc" style="left:543px;top:438px;color:#ccccdc;-webkit-text-stroke:0.15px #ccccdc">Треснутый мягкий алицит</div><div class="t ls" style="left:899px;top:438px;color:#ccccdc;-webkit-text-stroke:0.15px #ccccdc">49</div><div class="t ls" style="left:999px;top:438px;color:#ccccdc;-webkit-text-stroke:0.15px #ccccdc">68</div><div class="t ls" style="left:1091px;top:438px;color:#ccccdc;-webkit-text-stroke:0.15px #ccccdc">3064</div><div class="t ls" style="left:1191px;top:438px;color:#ccccdc;-webkit-text-stroke:0.15px #ccccdc">148,93</div><div class="t ls" style="left:1282px;top:438px;color:#ccccdc;-webkit-text-stroke:0.15px #ccccdc">410,14</div><div class="t ls" style="left:1376px;top:438px;color:#ccccdc;-webkit-text-stroke:0.15px #ccccdc">140</div><div class="t ls" style="left:1686px;top:438px;color:#3272da;-webkit-text-stroke:0.15px #3272da">65.9%</div><div class="t ls" style="left:1776px;top:438px;color:#ccccdc;-webkit-text-stroke:0.15px #ccccdc">228</div><div class="t ls" style="left:1856px;top:438px;color:#f2495c;-webkit-text-stroke:0.15px #f2495c">-38.6%</div><div class="t ls" style="left:1958px;top:438px;color:#ccccdc;-webkit-text-stroke:0.15px #ccccdc">62</div><div class="t ls" style="left:2063px;top:438px;color:#f2495c;-webkit-text-stroke:0.15px #f2495c">-9.68%</div><div class="t ls" style="left:2140px;top:438px;color:#ccccdc;-webkit-text-stroke:0.15px #ccccdc">204,75</div><div class="t ls" style="left:2229px;top:438px;color:#3272da;-webkit-text-stroke:0.15px #3272da">100%</div><div class="t ls" style="left:2320px;top:438px;color:#73bf69;-webkit-text-stroke:0.15px #73bf69">BUY</div><div class="t ls" style="left:328px;top:474px;color:#6e9fff;-webkit-text-stroke:0.15px #6e9fff">40155</div><div class="t ls" style="left:428px;top:474px;color:#ccccdc;-webkit-text-stroke:0.15px #ccccdc">5 hours ago</div><div class="t lc" style="left:543px;top:474px;color:#ccccdc;-webkit-text-stroke:0.15px #ccccdc">Тревожный аметрин</div><div class="t ls" style="left:899px;top:474px;color:#ccccdc;-webkit-text-stroke:0.15px #ccccdc">78</div><div class="t ls" style="left:999px;top:474px;color:#ccccdc;-webkit-text-stroke:0.15px #ccccdc">35</div><div class="t ls" style="left:1091px;top:474px;color:#ccccdc;-webkit-text-stroke:0.15px #ccccdc">1803</div><div class="t ls" style="left:1191px;top:474px;color:#ccccdc;-webkit-text-stroke:0.15px #ccccdc">28,88</div><div class="t ls" style="left:1282px;top:474px;color:#ccccdc;-webkit-text-stroke:0.15px #ccccdc">81,51</div><div class="t ls" style="left:1376px;top:474px;color:#ccccdc;-webkit-text-stroke:0.15px #ccccdc">29,63</div><div class="t ls" style="left:1582px;top:474px;color:#ccccdc;-webkit-text-stroke:0.15px #ccccdc">4</div><div class="t ls" style="left:1686px;top:474px;color:#3272da;-webkit-text-stroke:0.15px #3272da">63.6%</div><div class="t ls" style="left:1776px;top:474px;color:#ccccdc;-webkit-text-stroke:0.15px #ccccdc">11,99</div><div class="t ls" style="left:1856px;top:474px;color:#3272da;-webkit-text-stroke:0.15px #3272da">147%</div><div class="t ls" style="left:1958px;top:474px;color:#ccccdc;-webkit-text-stroke:0.15px #ccccdc">77</div><div class="t ls" style="left:2063px;top:474px;color:#3272da;-webkit-text-stroke:0.15px #3272da">119%</div><div class="t ls" style="left:2140px;top:474px;color:#ccccdc;-webkit-text-stroke:0.15px #ccccdc">29,87</div><div class="t ls" style="left:2229px;top:474px;color:#3272da;-webkit-text-stroke:0.15px #3272da">173%</div><div class="t ls" style="left:2320px;top:474px;color:#73bf69;-webkit-text-stroke:0.15px #73bf69">BUY</div><div class="t ls" style="left:328px;top:510px;color:#6e9fff;-webkit-text-stroke:0.15px #6e9fff">52081</div><div class="t ls" style="left:428px;top:510px;color:#ccccdc;-webkit-text-stroke:0.15px #ccccdc">5 hours ago</div><div class="t lc" style="left:543px;top:510px;color:#ccccdc;-webkit-text-stroke:0.15px #ccccdc">Рельефный сердолик</div><div class="t ls" style="left:899px;top:510px;color:#ccccdc;-webkit-text-stroke:0.15px #ccccdc">55</div><div class="t ls" style="left:999px;top:510px;color:#ccccdc;-webkit-text-stroke:0.15px #ccccdc">25</div><div class="t ls" style="left:1091px;top:510px;color:#ccccdc;-webkit-text-stroke:0.15px #ccccdc">1288</div><div class="t ls" style="left:1191px;top:510px;color:#ccccdc;-webkit-text-stroke:0.15px #ccccdc">200,52</div><div class="t ls" style="left:1282px;top:510px;color:#ccccdc;-webkit-text-stroke:0.15px #ccccdc">1 601,31</div><div class="t ls" style="left:1376px;top:510px;color:#ccccdc;-webkit-text-stroke:0.15px #ccccdc">650,87</div><div class="t ls" style="left:1686px;top:510px;color:#3272da;-webkit-text-stroke:0.15px #3272da">59.4%</div><div class="t ls" style="left:1776px;top:510px;color:#ccccdc;-webkit-text-stroke:0.15px #ccccdc">72</div><div class="t ls" style="left:1856px;top:510px;color:#3272da;-webkit-text-stroke:0.15px #3272da">804%</div><div class="t ls" style="left:1958px;top:510px;color:#ccccdc;-webkit-text-stroke:0.15px #ccccdc">46</div><div class="t ls" style="left:2063px;top:510px;color:#4a86ea;-webkit-text-stroke:0.15px #4a86ea">87.4%</div><div class="t ls" style="left:2140px;top:510px;color:#ccccdc;-webkit-text-stroke:0.15px #ccccdc">500,29</div><div class="t ls" style="left:2229px;top:510px;color:#3272da;-webkit-text-stroke:0.15px #3272da">220%</div><div class="t ls" style="left:2320px;top:510px;color:#73bf69;-webkit-text-stroke:0.15px #73bf69">BUY</div><div class="t ls" style="left:328px;top:546px;color:#6e9fff;-webkit-text-stroke:0.15px #6e9fff">149000</div><div class="t ls" style="left:428px;top:546px;color:#ccccdc;-webkit-text-stroke:0.15px #ccccdc">5 hours ago</div><div class="t lc" style="left:543px;top:546px;color:#ccccdc;-webkit-text-stroke:0.15px #ccccdc">Совершенный рельефный сердолик</div><div class="t ls" style="left:899px;top:546px;color:#ccccdc;-webkit-text-stroke:0.15px #ccccdc">34</div><div class="t ls" style="left:999px;top:546px;color:#ccccdc;-webkit-text-stroke:0.15px #ccccdc">13</div><div class="t ls" style="left:1091px;top:546px;color:#ccccdc;-webkit-text-stroke:0.15px #ccccdc">630</div><div class="t ls" style="left:1191px;top:546px;color:#ccccdc;-webkit-text-stroke:0.15px #ccccdc">550,55</div><div class="t ls" style="left:1282px;top:546px;color:#ccccdc;-webkit-text-stroke:0.15px #ccccdc">3 083,89</div><div class="t ls" style="left:1376px;top:546px;color:#ccccdc;-webkit-text-stroke:0.15px #ccccdc">1 326</div><div class="t ls" style="left:1686px;top:546px;color:#3272da;-webkit-text-stroke:0.15px #3272da">57.0%</div><div class="t ls" style="left:1776px;top:546px;color:#ccccdc;-webkit-text-stroke:0.15px #ccccdc">1 226,87</div><div class="t ls" style="left:1856px;top:546px;color:#6ba0f5;-webkit-text-stroke:0.15px #6ba0f5">8.08%</div><div class="t ls" style="left:1958px;top:546px;color:#ccccdc;-webkit-text-stroke:0.15px #ccccdc">22</div><div class="t ls" style="left:2063px;top:546px;color:#4a86ea;-webkit-text-stroke:0.15px #4a86ea">65.2%</div><div class="t ls" style="left:2140px;top:546px;color:#ccccdc;-webkit-text-stroke:0.15px #ccccdc">1 328</div><div class="t ls" style="left:2229px;top:546px;color:#3272da;-webkit-text-stroke:0.15px #3272da">132%</div><div class="t ls" style="left:2320px;top:546px;color:#73bf69;-webkit-text-stroke:0.15px #73bf69">BUY</div><div class="t ls" style="left:328px;top:582px;color:#6e9fff;-webkit-text-stroke:0.15px #6e9fff">149250</div><div class="t ls" style="left:428px;top:582px;color:#ccccdc;-webkit-text-stroke:0.15px #ccccdc">5 hours ago</div><div class="t lc" style="left:543px;top:582px;color:#ccccdc;-webkit-text-stroke:0.15px #ccccdc">Зачарованный рельефный сердолик</div><div class="t ls" style="left:899px;top:582px;color:#ccccdc;-webkit-text-stroke:0.15px #ccccdc">44</div><div class="t ls" style="left:999px;top:582px;color:#ccccdc;-webkit-text-stroke:0.15px #ccccdc">35</div><div class="t ls" style="left:1091px;top:582px;color:#ccccdc;-webkit-text-stroke:0.15px #ccccdc">3744</div><div class="t ls" style="left:1191px;top:582px;color:#ccccdc;-webkit-text-stroke:0.15px #ccccdc">2 460,98</div><div class="t ls" style="left:1282px;top:582px;color:#ccccdc;-webkit-text-stroke:0.15px #ccccdc">6 890,44</div><div class="t ls" style="left:1376px;top:582px;color:#ccccdc;-webkit-text-stroke:0.15px #ccccdc">3 100,87</div><div class="t ls" style="left:1482px;top:582px;color:#ccccdc;-webkit-text-stroke:0.15px #ccccdc">2300</div><div class="t ls" style="left:1686px;top:582px;color:#3272da;-webkit-text-stroke:0.15px #3272da">55.0%</div><div class="t ls" style="left:1776px;top:582px;color:#ccccdc;-webkit-text-stroke:0.15px #ccccdc">4 600</div><div class="t ls" style="left:1856px;top:582px;color:#f2495c;-webkit-text-stroke:0.15px #f2495c">-32.6%</div><div class="t ls" style="left:1958px;top:582px;color:#ccccdc;-webkit-text-stroke:0.15px #ccccdc">45</div><div class="t ls" style="left:2063px;top:582px;color:#6ba0f5;-webkit-text-stroke:0.15px #6ba0f5">28.6%</div><div class="t ls" style="left:2140px;top:582px;color:#ccccdc;-webkit-text-stroke:0.15px #ccccdc">3 679,96</div><div class="t ls" style="left:2229px;top:582px;color:#4a86ea;-webkit-text-stroke:0.15px #4a86ea">87.2%</div><div class="t ls" style="left:2320px;top:582px;color:#73bf69;-webkit-text-stroke:0.15px #73bf69">BUY</div><div class="t ls" style="left:328px;top:618px;color:#6e9fff;-webkit-text-stroke:0.15px #6e9fff">49110</div><div class="t ls" style="left:428px;top:618px;color:#ccccdc;-webkit-text-stroke:0.15px #ccccdc">5 hours ago</div><div class="t lc" style="left:543px;top:618px;color:#ccccdc;-webkit-text-stroke:0.15px #ccccdc">Слеза кошмаров</div><div class="t ls" style="left:899px;top:618px;color:#ccccdc;-webkit-text-stroke:0.15px #ccccdc">9</div><div class="t ls" style="left:999px;top:618px;color:#ccccdc;-webkit-text-stroke:0.15px #ccccdc">15</div><div class="t ls" style="left:1091px;top:618px;color:#ccccdc;-webkit-text-stroke:0.15px #ccccdc">766</div><div class="t ls" style="left:1191px;top:618px;color:#ccccdc;-webkit-text-stroke:0.15px #ccccdc">146,66</div><div class="t ls" style="left:1282px;top:618px;color:#ccccdc;-webkit-text-stroke:0.15px #ccccdc">320,23</div><div class="t ls" style="left:1376px;top:618px;color:#ccccdc;-webkit-text-stroke:0.15px #ccccdc">146,66</div><div class="t ls" style="left:1582px;top:618px;color:#ccccdc;-webkit-text-stroke:0.15px #ccccdc">2</div><div class="t ls" style="left:1686px;top:618px;color:#3272da;-webkit-text-stroke:0.15px #3272da">54.2%</div><div class="t ls" style="left:1776px;top:618px;color:#ccccdc;-webkit-text-stroke:0.15px #ccccdc">66,1</div><div class="t ls" style="left:1856px;top:618px;color:#3272da;-webkit-text-stroke:0.15px #3272da">122%</div><div class="t ls" style="left:1958px;top:618px;color:#ccccdc;-webkit-text-stroke:0.15px #ccccdc">12</div><div class="t ls" style="left:2063px;top:618px;color:#f2495c;-webkit-text-stroke:0.15px #f2495c">-20.1%</div><div class="t ls" style="left:2140px;top:618px;color:#ccccdc;-webkit-text-stroke:0.15px #ccccdc">157,99</div><div class="t ls" style="left:2229px;top:618px;color:#3272da;-webkit-text-stroke:0.15px #3272da">103%</div><div class="t ls" style="left:2320px;top:618px;color:#73bf69;-webkit-text-stroke:0.15px #73bf69">BUY</div><div class="t ls" style="left:328px;top:654px;color:#6e9fff;-webkit-text-stroke:0.15px #6e9fff">40120</div><div class="t ls" style="left:428px;top:654px;color:#ccccdc;-webkit-text-stroke:0.15px #ccccdc">5 hours ago</div><div class="t lc" style="left:543px;top:654px;color:#ccccdc;-webkit-text-stroke:0.15px #ccccdc">Искрящийся величественный циркон</div><div class="t ls" style="left:899px;top:654px;color:#ccccdc;-webkit-text-stroke:0.15px #ccccdc">55</div><div class="t ls" style="left:999px;top:654px;color:#ccccdc;-webkit-text-stroke:0.15px #ccccdc">38</div><div class="t ls" style="left:1091px;top:654px;color:#ccccdc;-webkit-text-stroke:0.15px #ccccdc">1893</div><div class="t ls" style="left:1191px;top:654px;color:#ccccdc;-webkit-text-stroke:0.15px #ccccdc">44,99</div><div class="t ls" style="left:1282px;top:654px;color:#ccccdc;-webkit-text-stroke:0.15px #ccccdc">95,57</div><div class="t ls" style="left:1376px;top:654px;color:#ccccdc;-webkit-text-stroke:0.15px #ccccdc">49,95</div><div class="t ls" style="left:1686px;top:654px;color:#3272da;-webkit-text-stroke:0.15px #3272da">47.7%</div><div class="t ls" style="left:1776px;top:654px;color:#ccccdc;-webkit-text-stroke:0.15px #ccccdc">29,7</div><div class="t ls" style="left:1856px;top:654px;color:#4a86ea;-webkit-text-stroke:0.15px #4a86ea">68.2%</div><div class="t ls" style="left:1958px;top:654px;color:#ccccdc;-webkit-text-stroke:0.15px #ccccdc">58</div><div class="t ls" style="left:2063px;top:654px;color:#4a86ea;-webkit-text-stroke:0.15px #4a86ea">54.3%</div><div class="t ls" style="left:2140px;top:654px;color:#ccccdc;-webkit-text-stroke:0.15px #ccccdc">75,29</div><div class="t ls" style="left:2229px;top:654px;color:#d8e4fb;-webkit-text-stroke:0.15px #d8e4fb">26.9%</div><div class="t ls" style="left:2320px;top:654px;color:#73bf69;-webkit-text-stroke:0.15px #73bf69">BUY</div><div class="t ls" style="left:328px;top:690px;color:#6e9fff;-webkit-text-stroke:0.15px #6e9fff">40125</div><div class="t ls" style="left:428px;top:690px;color:#ccccdc;-webkit-text-stroke:0.15px #ccccdc">5 hours ago</div><div class="t lc" style="left:543px;top:690px;color:#ccccdc;-webkit-text-stroke:0.15px #ccccdc">Прочный царский янтарь</div><div class="t ls" style="left:899px;top:690px;color:#ccccdc;-webkit-text-stroke:0.15px #ccccdc">49</div><div class="t ls" style="left:999px;top:690px;color:#ccccdc;-webkit-text-stroke:0.15px #ccccdc">32</div><div class="t ls" style="left:1091px;top:690px;color:#ccccdc;-webkit-text-stroke:0.15px #ccccdc">1655</div><div class="t ls" style="left:1191px;top:690px;color:#ccccdc;-webkit-text-stroke:0.15px #ccccdc">58,88</div><div class="t ls" style="left:1282px;top:690px;color:#ccccdc;-webkit-text-stroke:0.15px #ccccdc">113,72</div><div class="t ls" style="left:1376px;top:690px;color:#ccccdc;-webkit-text-stroke:0.15px #ccccdc">60</div><div class="t ls" style="left:1582px;top:690px;color:#ccccdc;-webkit-text-stroke:0.15px #ccccdc">10</div><div class="t ls" style="left:1686px;top:690px;color:#3272da;-webkit-text-stroke:0.15px #3272da">47.2%</div><div class="t ls" style="left:1776px;top:690px;color:#ccccdc;-webkit-text-stroke:0.15px #ccccdc">43,95</div><div class="t ls" style="left:1856px;top:690px;color:#6ba0f5;-webkit-text-stroke:0.15px #6ba0f5">36.5%</div><div class="t ls" style="left:1958px;top:690px;color:#ccccdc;-webkit-text-stroke:0.15px #ccccdc">87</div><div class="t ls" style="left:2063px;top:690px;color:#3272da;-webkit-text-stroke:0.15px #3272da">172%</div><div class="t ls" style="left:2140px;top:690px;color:#ccccdc;-webkit-text-stroke:0.15px #ccccdc">62,94</div><div class="t ls" style="left:2229px;top:690px;color:#4a86ea;-webkit-text-stroke:0.15px #4a86ea">80.7%</div><div class="t ls" style="left:2320px;top:690px;color:#73bf69;-webkit-text-stroke:0.15px #73bf69">BUY</div><div class="t ls" style="left:328px;top:726px;color:#6e9fff;-webkit-text-stroke:0.15px #6e9fff">149333</div><div class="t ls" style="left:428px;top:726px;color:#ccccdc;-webkit-text-stroke:0.15px #ccccdc">5 hours ago</div><div class="t lc" style="left:543px;top:726px;color:#ccccdc;-webkit-text-stroke:0.15px #ccccdc">Зачарованный ювелирный кристалл</div><div class="t ls" style="left:899px;top:726px;color:#ccccdc;-webkit-text-stroke:0.15px #ccccdc">213</div><div class="t ls" style="left:999px;top:726px;color:#ccccdc;-webkit-text-stroke:0.15px #ccccdc">176</div><div class="t ls" style="left:1091px;top:726px;color:#ccccdc;-webkit-text-stroke:0.15px #ccccdc">8083</div><div class="t ls" style="left:1191px;top:726px;color:#ccccdc;-webkit-text-stroke:0.15px #ccccdc">1 750,89</div><div class="t ls" style="left:1282px;top:726px;color:#ccccdc;-webkit-text-stroke:0.15px #ccccdc">3 244,26</div><div class="t ls" style="left:1376px;top:726px;color:#ccccdc;-webkit-text-stroke:0.15px #ccccdc">1 740,8</div><div class="t ls" style="left:1686px;top:726px;color:#3272da;-webkit-text-stroke:0.15px #3272da">46.3%</div><div class="t ls" style="left:1776px;top:726px;color:#ccccdc;-webkit-text-stroke:0.15px #ccccdc">1 500</div><div class="t ls" style="left:1856px;top:726px;color:#6ba0f5;-webkit-text-stroke:0.15px #6ba0f5">16.1%</div><div class="t ls" style="left:1958px;top:726px;color:#ccccdc;-webkit-text-stroke:0.15px #ccccdc">261</div><div class="t ls" style="left:2063px;top:726px;color:#6ba0f5;-webkit-text-stroke:0.15px #6ba0f5">48.3%</div><div class="t ls" style="left:2140px;top:726px;color:#ccccdc;-webkit-text-stroke:0.15px #ccccdc">1 865,52</div><div class="t ls" style="left:2229px;top:726px;color:#4a86ea;-webkit-text-stroke:0.15px #4a86ea">73.9%</div><div class="t ls" style="left:2320px;top:726px;color:#73bf69;-webkit-text-stroke:0.15px #73bf69">BUY</div><div class="t ls" style="left:328px;top:762px;color:#6e9fff;-webkit-text-stroke:0.15px #6e9fff">40147</div><div class="t ls" style="left:428px;top:762px;color:#ccccdc;-webkit-text-stroke:0.15px #ccccdc">5 hours ago</div><div class="t lc" style="left:543px;top:762px;color:#ccccdc;-webkit-text-stroke:0.15px #ccccdc">Смертоносный аметрин</div><div class="t ls" style="left:899px;top:762px;color:#ccccdc;-webkit-text-stroke:0.15px #ccccdc">7</div><div class="t ls" style="left:999px;top:762px;color:#ccccdc;-webkit-text-stroke:0.15px #ccccdc">16</div><div class="t ls" style="left:1091px;top:762px;color:#ccccdc;-webkit-text-stroke:0.15px #ccccdc">689</div><div class="t ls" style="left:1191px;top:762px;color:#ccccdc;-webkit-text-stroke:0.15px #ccccdc">25</div><div class="t ls" style="left:1282px;top:762px;color:#ccccdc;-webkit-text-stroke:0.15px #ccccdc">74,73</div><div class="t ls" style="left:1376px;top:762px;color:#ccccdc;-webkit-text-stroke:0.15px #ccccdc">43,33</div><div class="t ls" style="left:1582px;top:762px;color:#ccccdc;-webkit-text-stroke:0.15px #ccccdc">5</div><div class="t ls" style="left:1686px;top:762px;color:#3272da;-webkit-text-stroke:0.15px #3272da">42.0%</div><div class="t ls" style="left:1776px;top:762px;color:#ccccdc;-webkit-text-stroke:0.15px #ccccdc">11,99</div><div class="t ls" style="left:1856px;top:762px;color:#3272da;-webkit-text-stroke:0.15px #3272da">261%</div><div class="t ls" style="left:1958px;top:762px;color:#ccccdc;-webkit-text-stroke:0.15px #ccccdc">16</div><div class="t ls" style="left:2063px;top:762px;color:#6ba0f5;-webkit-text-stroke:0.15px #6ba0f5">4.91%</div><div class="t ls" style="left:2140px;top:762px;color:#ccccdc;-webkit-text-stroke:0.15px #ccccdc">36,78</div><div class="t ls" style="left:2229px;top:762px;color:#3272da;-webkit-text-stroke:0.15px #3272da">103%</div><div class="t ls" style="left:2320px;top:762px;color:#73bf69;-webkit-text-stroke:0.15px #73bf69">BUY</div><div class="a" style="left:1286px;top:825px;width:32px;height:24px;background:#1d2025;border-radius:2px"></div><svg class="a" style="left:0;top:0;overflow:visible" width="1" height="1"><path d="M1303.75 833.75 L1300.25 837 L1303.75 840.25" fill="none" stroke="rgba(204,204,220,0.45)" stroke-width="1.3" stroke-linecap="round" stroke-linejoin="round"/></svg><div class="a" style="left:1328px;top:825px;width:21px;height:24px;background:#3d71d9;border-radius:2px"></div><div class="t" style="left:1335px;top:829px;color:#fff;font-size:13px;font-weight:bold">1</div><div class="a" style="left:1359px;top:825px;width:24px;height:24px;background:#2a2c31;border-radius:2px"></div><div class="t" style="left:1367px;top:829px;color:#ccccdc;font-size:13px;-webkit-text-stroke:0.3px #ccccdc">2</div><div class="a" style="left:1393px;top:825px;width:23px;height:24px;background:#2a2c31;border-radius:2px"></div><div class="t" style="left:1401px;top:829px;color:#ccccdc;font-size:13px;-webkit-text-stroke:0.3px #ccccdc">3</div><div class="a" style="left:1426px;top:825px;width:32px;height:24px;background:#2a2c31;border-radius:2px"></div><svg class="a" style="left:0;top:0;overflow:visible" width="1" height="1"><path d="M1440.25 833.75 L1443.75 837 L1440.25 840.25" fill="none" stroke="rgba(204,204,220,0.85)" stroke-width="1.3" stroke-linecap="round" stroke-linejoin="round"/></svg><div class="t" style="left:1474px;top:830px;color:rgba(204,204,220,0.65);font-size:13px;letter-spacing:-0.05px">1 - 16 of 35 rows</div><div class="a" style="left:313px;top:865px;width:2228px;height:441px;background:#181b1f;border:1px solid #2c2e33;border-bottom:none;border-radius:2px 2px 0 0"></div><div class="t" style="left:322px;top:875px;color:#ccccdc;font-size:14px;letter-spacing:0.6px;-webkit-text-stroke:0.35px #ccccdc">Объёмы</div><svg class="a" style="left:0;top:0;overflow:visible" width="1" height="1"><rect x="359" y="920" width="2166" height="1" fill="rgba(204,204,220,0.10)"/><rect x="359" y="952" width="2166" height="1" fill="rgba(204,204,220,0.10)"/><rect x="359" y="985" width="2166" height="1" fill="rgba(204,204,220,0.10)"/><rect x="359" y="1017" width="2166" height="1" fill="rgba(204,204,220,0.10)"/><rect x="359" y="1049" width="2166" height="1" fill="rgba(204,204,220,0.10)"/><rect x="359" y="1081" width="2166" height="1" fill="rgba(204,204,220,0.10)"/><rect x="359" y="1113" width="2166" height="1" fill="rgba(204,204,220,0.10)"/><rect x="359" y="1145" width="2166" height="1" fill="rgba(204,204,220,0.10)"/><rect x="359" y="1177" width="2166" height="1" fill="rgba(204,204,220,0.10)"/><rect x="359" y="1209" width="2166" height="1" fill="rgba(204,204,220,0.10)"/><rect x="359" y="1241" width="2166" height="1" fill="rgba(204,204,220,0.10)"/><rect x="359" y="1273" width="2166" height="1" fill="rgba(204,204,220,0.10)"/></svg><div class="t" style="left:253px;top:912px;width:100px;text-align:right;font-size:12px;letter-spacing:0.8px;color:rgba(204,204,220,0.9);-webkit-text-stroke:0.2px rgba(204,204,220,0.9)">5500</div><div class="t" style="left:253px;top:944px;width:100px;text-align:right;font-size:12px;letter-spacing:0.8px;color:rgba(204,204,220,0.9);-webkit-text-stroke:0.2px rgba(204,204,220,0.9)">5000</div><div class="t" style="left:253px;top:977px;width:100px;text-align:right;font-size:12px;letter-spacing:0.8px;color:rgba(204,204,220,0.9);-webkit-text-stroke:0.2px rgba(204,204,220,0.9)">4500</div><div class="t" style="left:253px;top:1009px;width:100px;text-align:right;font-size:12px;letter-spacing:0.8px;color:rgba(204,204,220,0.9);-webkit-text-stroke:0.2px rgba(204,204,220,0.9)">4000</div><div class="t" style="left:253px;top:1041px;width:100px;text-align:right;font-size:12px;letter-spacing:0.8px;color:rgba(204,204,220,0.9);-webkit-text-stroke:0.2px rgba(204,204,220,0.9)">3500</div><div class="t" style="left:253px;top:1073px;width:100px;text-align:right;font-size:12px;letter-spacing:0.8px;color:rgba(204,204,220,0.9);-webkit-text-stroke:0.2px rgba(204,204,220,0.9)">3000</div><div class="t" style="left:253px;top:1105px;width:100px;text-align:right;font-size:12px;letter-spacing:0.8px;color:rgba(204,204,220,0.9);-webkit-text-stroke:0.2px rgba(204,204,220,0.9)">2500</div><div class="t" style="left:253px;top:1137px;width:100px;text-align:right;font-size:12px;letter-spacing:0.8px;color:rgba(204,204,220,0.9);-webkit-text-stroke:0.2px rgba(204,204,220,0.9)">2000</div><div class="t" style="left:253px;top:1169px;width:100px;text-align:right;font-size:12px;letter-spacing:0.8px;color:rgba(204,204,220,0.9);-webkit-text-stroke:0.2px rgba(204,204,220,0.9)">1500</div><div class="t" style="left:253px;top:1201px;width:100px;text-align:right;font-size:12px;letter-spacing:0.8px;color:rgba(204,204,220,0.9);-webkit-text-stroke:0.2px rgba(204,204,220,0.9)">1000</div><div class="t" style="left:253px;top:1233px;width:100px;text-align:right;font-size:12px;letter-spacing:0.8px;color:rgba(204,204,220,0.9);-webkit-text-stroke:0.2px rgba(204,204,220,0.9)">500</div><div class="t" style="left:253px;top:1265px;width:100px;text-align:right;font-size:12px;letter-spacing:0.8px;color:rgba(204,204,220,0.9);-webkit-text-stroke:0.2px rgba(204,204,220,0.9)">0</div><div class="t" style="left:392.2px;top:1286px;width:80px;text-align:center;font-size:12px;letter-spacing:0.9px;color:rgba(204,204,220,0.9);-webkit-text-stroke:0.25px rgba(204,204,220,0.9)">12/13</div><div class="t" style="left:536.7px;top:1286px;width:80px;text-align:center;font-size:12px;letter-spacing:0.9px;color:rgba(204,204,220,0.9);-webkit-text-stroke:0.25px rgba(204,204,220,0.9)">12/14</div><div class="t" style="left:681.1px;top:1286px;width:80px;text-align:center;font-size:12px;letter-spacing:0.9px;color:rgba(204,204,220,0.9);-webkit-text-stroke:0.25px rgba(204,204,220,0.9)">12/30</div><div class="t" style="left:825.6px;top:1286px;width:80px;text-align:center;font-size:12px;letter-spacing:0.9px;color:rgba(204,204,220,0.9);-webkit-text-stroke:0.25px rgba(204,204,220,0.9)">01/01</div><div class="t" style="left:970.0px;top:1286px;width:80px;text-align:center;font-size:12px;letter-spacing:0.9px;color:rgba(204,204,220,0.9);-webkit-text-stroke:0.25px rgba(204,204,220,0.9)">01/27</div><div class="t" style="left:1114.5px;top:1286px;width:80px;text-align:center;font-size:12px;letter-spacing:0.9px;color:rgba(204,204,220,0.9);-webkit-text-stroke:0.25px rgba(204,204,220,0.9)">01/31</div><div class="t" style="left:1259.0px;top:1286px;width:80px;text-align:center;font-size:12px;letter-spacing:0.9px;color:rgba(204,204,220,0.9);-webkit-text-stroke:0.25px rgba(204,204,220,0.9)">02/03</div><div class="t" style="left:1403.4px;top:1286px;width:80px;text-align:center;font-size:12px;letter-spacing:0.9px;color:rgba(204,204,220,0.9);-webkit-text-stroke:0.25px rgba(204,204,220,0.9)">02/04</div><div class="t" style="left:1547.9px;top:1286px;width:80px;text-align:center;font-size:12px;letter-spacing:0.9px;color:rgba(204,204,220,0.9);-webkit-text-stroke:0.25px rgba(204,204,220,0.9)">02/05</div><div class="t" style="left:1692.3px;top:1286px;width:80px;text-align:center;font-size:12px;letter-spacing:0.9px;color:rgba(204,204,220,0.9);-webkit-text-stroke:0.25px rgba(204,204,220,0.9)">02/06</div><div class="t" style="left:1836.8px;top:1286px;width:80px;text-align:center;font-size:12px;letter-spacing:0.9px;color:rgba(204,204,220,0.9);-webkit-text-stroke:0.25px rgba(204,204,220,0.9)">02/07</div><div class="t" style="left:1981.3px;top:1286px;width:80px;text-align:center;font-size:12px;letter-spacing:0.9px;color:rgba(204,204,220,0.9);-webkit-text-stroke:0.25px rgba(204,204,220,0.9)">02/08</div><div class="t" style="left:2125.7px;top:1286px;width:80px;text-align:center;font-size:12px;letter-spacing:0.9px;color:rgba(204,204,220,0.9);-webkit-text-stroke:0.25px rgba(204,204,220,0.9)">02/09</div><div class="t" style="left:2270.2px;top:1286px;width:80px;text-align:center;font-size:12px;letter-spacing:0.9px;color:rgba(204,204,220,0.9);-webkit-text-stroke:0.25px rgba(204,204,220,0.9)">02/10</div><div class="t" style="left:2414.6px;top:1286px;width:80px;text-align:center;font-size:12px;letter-spacing:0.9px;color:rgba(204,204,220,0.9);-webkit-text-stroke:0.25px rgba(204,204,220,0.9)">02/11</div><svg class="a" style="left:0;top:0;overflow:visible" width="1" height="1"><rect x="362.30" y="1166.00" width="139.8" height="1.80" fill="#68b4c8"/><rect x="362.30" y="1167.80" width="139.8" height="3.20" fill="#bd8f12"/><rect x="362.30" y="1171.00" width="139.8" height="1.40" fill="#c09ad6"/><rect x="362.30" y="1172.40" width="139.8" height="20.60" fill="#bc8abc"/><rect x="362.80" y="1172.90" width="138.8" height="19.60" fill="none" stroke="#e4a5e3" stroke-width="1"/><rect x="362.30" y="1193.00" width="139.8" height="2.00" fill="#6f99b7"/><rect x="362.30" y="1195.00" width="139.8" height="4.00" fill="#c87878"/><rect x="362.80" y="1195.50" width="138.8" height="3.00" fill="none" stroke="#f38f8e" stroke-width="1"/><rect x="362.30" y="1199.00" width="139.8" height="6.20" fill="#cf9c7b"/><rect x="362.80" y="1199.50" width="138.8" height="5.20" fill="none" stroke="#fcbc92" stroke-width="1"/><rect x="362.30" y="1205.20" width="139.8" height="1.10" fill="#62b8cb"/><rect x="362.30" y="1206.30" width="139.8" height="0.90" fill="#e2dc90"/><rect x="362.30" y="1207.20" width="139.8" height="9.60" fill="#0e3b6b"/><rect x="362.80" y="1207.70" width="138.8" height="8.60" fill="none" stroke="#0b437d" stroke-width="1"/><rect x="362.30" y="1216.80" width="139.8" height="1.40" fill="#7a1010"/><rect x="362.30" y="1218.20" width="139.8" height="4.10" fill="#a1511c"/><rect x="362.80" y="1218.70" width="138.8" height="3.10" fill="none" stroke="#c35e1b" stroke-width="1"/><rect x="362.30" y="1222.30" width="139.8" height="2.30" fill="#3f72a8"/><rect x="362.30" y="1224.60" width="139.8" height="1.90" fill="#f0d0e8"/><rect x="362.30" y="1226.50" width="139.8" height="27.00" fill="#a8c8a2"/><rect x="362.80" y="1227.00" width="138.8" height="26.00" fill="none" stroke="#cbf3c2" stroke-width="1"/><rect x="362.30" y="1253.50" width="139.8" height="1.40" fill="#7a3498"/><rect x="362.30" y="1254.90" width="139.8" height="3.60" fill="#c8a000"/><rect x="362.30" y="1258.50" width="139.8" height="10.10" fill="#9a68b8"/><rect x="362.80" y="1259.00" width="138.8" height="9.10" fill="none" stroke="#ba7bde" stroke-width="1"/><rect x="362.30" y="1268.60" width="139.8" height="2.30" fill="#f08030"/><rect x="362.30" y="1270.90" width="139.8" height="0.90" fill="#4f7ecb"/><rect x="362.30" y="1271.80" width="139.8" height="1.20" fill="#70b050"/><rect x="506.76" y="1152.70" width="139.8" height="1.30" fill="#68b4c8"/><rect x="506.76" y="1154.00" width="139.8" height="4.40" fill="#bd8f12"/><rect x="507.26" y="1154.50" width="138.8" height="3.40" fill="none" stroke="#e6ab0e" stroke-width="1"/><rect x="506.76" y="1158.40" width="139.8" height="3.60" fill="#568a4b"/><rect x="506.76" y="1162.00" width="139.8" height="1.60" fill="#c09ad6"/><rect x="506.76" y="1163.60" width="139.8" height="25.20" fill="#bc8abc"/><rect x="507.26" y="1164.10" width="138.8" height="24.20" fill="none" stroke="#e4a5e3" stroke-width="1"/><rect x="506.76" y="1188.80" width="139.8" height="2.10" fill="#6f99b7"/><rect x="506.76" y="1190.90" width="139.8" height="4.10" fill="#c87878"/><rect x="507.26" y="1191.40" width="138.8" height="3.10" fill="none" stroke="#f38f8e" stroke-width="1"/><rect x="506.76" y="1195.00" width="139.8" height="5.70" fill="#cf9c7b"/><rect x="507.26" y="1195.50" width="138.8" height="4.70" fill="none" stroke="#fcbc92" stroke-width="1"/><rect x="506.76" y="1200.70" width="139.8" height="2.10" fill="#62b8cb"/><rect x="506.76" y="1202.80" width="139.8" height="6.20" fill="#0e3b6b"/><rect x="507.26" y="1203.30" width="138.8" height="5.20" fill="none" stroke="#0b437d" stroke-width="1"/><rect x="506.76" y="1209.00" width="139.8" height="1.00" fill="#7a1010"/><rect x="506.76" y="1210.00" width="139.8" height="5.10" fill="#a1511c"/><rect x="507.26" y="1210.50" width="138.8" height="4.10" fill="none" stroke="#c35e1b" stroke-width="1"/><rect x="506.76" y="1215.10" width="139.8" height="2.60" fill="#3f72a8"/><rect x="506.76" y="1217.70" width="139.8" height="3.60" fill="#d48a94"/><rect x="506.76" y="1221.30" width="139.8" height="1.60" fill="#b8d0e8"/><rect x="506.76" y="1222.90" width="139.8" height="24.20" fill="#a8c8a2"/><rect x="507.26" y="1223.40" width="138.8" height="23.20" fill="none" stroke="#cbf3c2" stroke-width="1"/><rect x="506.76" y="1247.10" width="139.8" height="3.10" fill="#7a3498"/><rect x="506.76" y="1250.20" width="139.8" height="1.00" fill="#a81828"/><rect x="506.76" y="1251.20" width="139.8" height="3.10" fill="#c8a000"/><rect x="506.76" y="1254.30" width="139.8" height="12.40" fill="#9a68b8"/><rect x="507.26" y="1254.80" width="138.8" height="11.40" fill="none" stroke="#ba7bde" stroke-width="1"/><rect x="506.76" y="1266.70" width="139.8" height="2.10" fill="#c84050"/><rect x="506.76" y="1268.80" width="139.8" height="2.50" fill="#f08030"/><rect x="506.76" y="1271.30" width="139.8" height="1.70" fill="#68b4c8"/><rect x="651.22" y="1158.10" width="139.8" height="1.40" fill="#68b4c8"/><rect x="651.22" y="1159.50" width="139.8" height="5.50" fill="#bd8f12"/><rect x="651.72" y="1160.00" width="138.8" height="4.50" fill="none" stroke="#e6ab0e" stroke-width="1"/><rect x="651.22" y="1165.00" width="139.8" height="1.20" fill="#568a4b"/><rect x="651.22" y="1166.20" width="139.8" height="1.70" fill="#c09ad6"/><rect x="651.22" y="1167.90" width="139.8" height="43.40" fill="#bc8abc"/><rect x="651.72" y="1168.40" width="138.8" height="42.40" fill="none" stroke="#e4a5e3" stroke-width="1"/><rect x="651.22" y="1211.30" width="139.8" height="2.00" fill="#6f99b7"/><rect x="651.22" y="1213.30" width="139.8" height="3.70" fill="#c87878"/><rect x="651.22" y="1217.00" width="139.8" height="1.20" fill="#62b8cb"/><rect x="651.22" y="1218.20" width="139.8" height="1.80" fill="#e2dc90"/><rect x="651.22" y="1220.00" width="139.8" height="1.00" fill="#5f1e58"/><rect x="651.22" y="1221.00" width="139.8" height="4.10" fill="#0e3b6b"/><rect x="651.72" y="1221.50" width="138.8" height="3.10" fill="none" stroke="#0b437d" stroke-width="1"/><rect x="651.22" y="1225.10" width="139.8" height="0.90" fill="#7a1010"/><rect x="651.22" y="1226.00" width="139.8" height="5.10" fill="#a1511c"/><rect x="651.72" y="1226.50" width="138.8" height="4.10" fill="none" stroke="#c35e1b" stroke-width="1"/><rect x="651.22" y="1231.10" width="139.8" height="1.20" fill="#3f72a8"/><rect x="651.22" y="1232.30" width="139.8" height="2.10" fill="#d48a94"/><rect x="651.22" y="1234.40" width="139.8" height="1.10" fill="#e2dc90"/><rect x="651.22" y="1235.50" width="139.8" height="19.90" fill="#a8c8a2"/><rect x="651.72" y="1236.00" width="138.8" height="18.90" fill="none" stroke="#cbf3c2" stroke-width="1"/><rect x="651.22" y="1255.40" width="139.8" height="1.50" fill="#7a3498"/><rect x="651.22" y="1256.90" width="139.8" height="1.20" fill="#f08030"/><rect x="651.22" y="1258.10" width="139.8" height="1.10" fill="#3f72a8"/><rect x="651.22" y="1259.20" width="139.8" height="9.90" fill="#9a68b8"/><rect x="651.72" y="1259.70" width="138.8" height="8.90" fill="none" stroke="#ba7bde" stroke-width="1"/><rect x="651.22" y="1269.10" width="139.8" height="1.70" fill="#c84050"/><rect x="651.22" y="1270.80" width="139.8" height="2.20" fill="#70b050"/><rect x="795.68" y="1167.10" width="139.8" height="2.00" fill="#68b4c8"/><rect x="795.68" y="1169.10" width="139.8" height="1.10" fill="#568a4b"/><rect x="795.68" y="1170.20" width="139.8" height="2.00" fill="#c09ad6"/><rect x="795.68" y="1172.20" width="139.8" height="37.90" fill="#bc8abc"/><rect x="796.18" y="1172.70" width="138.8" height="36.90" fill="none" stroke="#e4a5e3" stroke-width="1"/><rect x="795.68" y="1210.10" width="139.8" height="2.90" fill="#6f99b7"/><rect x="795.68" y="1213.00" width="139.8" height="4.60" fill="#c87878"/><rect x="796.18" y="1213.50" width="138.8" height="3.60" fill="none" stroke="#f38f8e" stroke-width="1"/><rect x="795.68" y="1217.60" width="139.8" height="1.80" fill="#62b8cb"/><rect x="795.68" y="1219.40" width="139.8" height="2.80" fill="#5f1e58"/><rect x="795.68" y="1222.20" width="139.8" height="7.00" fill="#0e3b6b"/><rect x="796.18" y="1222.70" width="138.8" height="6.00" fill="none" stroke="#0b437d" stroke-width="1"/><rect x="795.68" y="1229.20" width="139.8" height="1.70" fill="#7a1010"/><rect x="795.68" y="1230.90" width="139.8" height="1.70" fill="#3f72a8"/><rect x="795.68" y="1232.60" width="139.8" height="3.50" fill="#d48a94"/><rect x="795.68" y="1236.10" width="139.8" height="20.20" fill="#a8c8a2"/><rect x="796.18" y="1236.60" width="138.8" height="19.20" fill="none" stroke="#cbf3c2" stroke-width="1"/><rect x="795.68" y="1256.30" width="139.8" height="1.70" fill="#7a3498"/><rect x="795.68" y="1258.00" width="139.8" height="1.80" fill="#a81828"/><rect x="795.68" y="1259.80" width="139.8" height="1.20" fill="#3f72a8"/><rect x="795.68" y="1261.00" width="139.8" height="1.10" fill="#70b050"/><rect x="795.68" y="1262.10" width="139.8" height="7.00" fill="#9a68b8"/><rect x="796.18" y="1262.60" width="138.8" height="6.00" fill="none" stroke="#ba7bde" stroke-width="1"/><rect x="795.68" y="1269.10" width="139.8" height="1.90" fill="#c84050"/><rect x="795.68" y="1271.00" width="139.8" height="2.00" fill="#e0c830"/><rect x="940.14" y="1181.80" width="139.8" height="13.50" fill="#bd8f12"/><rect x="940.64" y="1182.30" width="138.8" height="12.50" fill="none" stroke="#e6ab0e" stroke-width="1"/><rect x="940.14" y="1195.30" width="139.8" height="0.90" fill="#cf9c7b"/><rect x="940.14" y="1196.20" width="139.8" height="11.00" fill="#bc8abc"/><rect x="940.64" y="1196.70" width="138.8" height="10.00" fill="none" stroke="#e4a5e3" stroke-width="1"/><rect x="940.14" y="1207.20" width="139.8" height="0.60" fill="#d48a94"/><rect x="940.14" y="1207.80" width="139.8" height="3.20" fill="#c87878"/><rect x="940.14" y="1211.00" width="139.8" height="10.90" fill="#0e3b6b"/><rect x="940.64" y="1211.50" width="138.8" height="9.90" fill="none" stroke="#0b437d" stroke-width="1"/><rect x="940.14" y="1221.90" width="139.8" height="5.80" fill="#a1511c"/><rect x="940.64" y="1222.40" width="138.8" height="4.80" fill="none" stroke="#c35e1b" stroke-width="1"/><rect x="940.14" y="1227.70" width="139.8" height="4.60" fill="#3f72a8"/><rect x="940.64" y="1228.20" width="138.8" height="3.60" fill="none" stroke="#4887ca" stroke-width="1"/><rect x="940.14" y="1232.30" width="139.8" height="38.50" fill="#a8c8a2"/><rect x="940.64" y="1232.80" width="138.8" height="37.50" fill="none" stroke="#cbf3c2" stroke-width="1"/><rect x="940.14" y="1270.80" width="139.8" height="1.50" fill="#c84050"/><rect x="940.14" y="1272.30" width="139.8" height="0.70" fill="#70b050"/><rect x="1084.60" y="1018.90" width="139.8" height="12.40" fill="#bd8f12"/><rect x="1085.10" y="1019.40" width="138.8" height="11.40" fill="none" stroke="#e6ab0e" stroke-width="1"/><rect x="1084.60" y="1031.30" width="139.8" height="145.10" fill="#bc8abc"/><rect x="1085.10" y="1031.80" width="138.8" height="144.10" fill="none" stroke="#e4a5e3" stroke-width="1"/><rect x="1084.60" y="1176.40" width="139.8" height="2.70" fill="#c87878"/><rect x="1084.60" y="1179.10" width="139.8" height="4.40" fill="#0e3b6b"/><rect x="1085.10" y="1179.60" width="138.8" height="3.40" fill="none" stroke="#0b437d" stroke-width="1"/><rect x="1084.60" y="1183.50" width="139.8" height="7.50" fill="#a1511c"/><rect x="1085.10" y="1184.00" width="138.8" height="6.50" fill="none" stroke="#c35e1b" stroke-width="1"/><rect x="1084.60" y="1191.00" width="139.8" height="4.70" fill="#3f72a8"/><rect x="1085.10" y="1191.50" width="138.8" height="3.70" fill="none" stroke="#4887ca" stroke-width="1"/><rect x="1084.60" y="1195.70" width="139.8" height="68.20" fill="#a8c8a2"/><rect x="1085.10" y="1196.20" width="138.8" height="67.20" fill="none" stroke="#cbf3c2" stroke-width="1"/><rect x="1084.60" y="1263.90" width="139.8" height="8.40" fill="#c84050"/><rect x="1085.10" y="1264.40" width="138.8" height="7.40" fill="none" stroke="#f3495c" stroke-width="1"/><rect x="1084.60" y="1272.30" width="139.8" height="0.70" fill="#70b050"/><rect x="1229.06" y="970.00" width="139.8" height="2.20" fill="#68b4c8"/><rect x="1229.06" y="972.20" width="139.8" height="11.60" fill="#bd8f12"/><rect x="1229.56" y="972.70" width="138.8" height="10.60" fill="none" stroke="#e6ab0e" stroke-width="1"/><rect x="1229.06" y="983.80" width="139.8" height="5.80" fill="#568a4b"/><rect x="1229.56" y="984.30" width="138.8" height="4.80" fill="none" stroke="#65a555" stroke-width="1"/><rect x="1229.06" y="989.60" width="139.8" height="2.40" fill="#c09ad6"/><rect x="1229.06" y="992.00" width="139.8" height="66.80" fill="#bc8abc"/><rect x="1229.56" y="992.50" width="138.8" height="65.80" fill="none" stroke="#e4a5e3" stroke-width="1"/><rect x="1229.06" y="1058.80" width="139.8" height="7.80" fill="#6f99b7"/><rect x="1229.56" y="1059.30" width="138.8" height="6.80" fill="none" stroke="#84b8dd" stroke-width="1"/><rect x="1229.06" y="1066.60" width="139.8" height="7.70" fill="#c87878"/><rect x="1229.56" y="1067.10" width="138.8" height="6.70" fill="none" stroke="#f38f8e" stroke-width="1"/><rect x="1229.06" y="1074.30" width="139.8" height="4.90" fill="#cf9c7b"/><rect x="1229.56" y="1074.80" width="138.8" height="3.90" fill="none" stroke="#fcbc92" stroke-width="1"/><rect x="1229.06" y="1079.20" width="139.8" height="4.90" fill="#62b8cb"/><rect x="1229.56" y="1079.70" width="138.8" height="3.90" fill="none" stroke="#74dff6" stroke-width="1"/><rect x="1229.06" y="1084.10" width="139.8" height="2.00" fill="#e0c890"/><rect x="1229.06" y="1086.10" width="139.8" height="2.90" fill="#a8c8a0"/><rect x="1229.06" y="1089.00" width="139.8" height="1.80" fill="#503868"/><rect x="1229.06" y="1090.80" width="139.8" height="5.10" fill="#5f1e58"/><rect x="1229.56" y="1091.30" width="138.8" height="4.10" fill="none" stroke="#701e66" stroke-width="1"/><rect x="1229.06" y="1095.90" width="139.8" height="5.30" fill="#0e3b6b"/><rect x="1229.56" y="1096.40" width="138.8" height="4.30" fill="none" stroke="#0b437d" stroke-width="1"/><rect x="1229.06" y="1101.20" width="139.8" height="7.70" fill="#7a1010"/><rect x="1229.56" y="1101.70" width="138.8" height="6.70" fill="none" stroke="#920d0c" stroke-width="1"/><rect x="1229.06" y="1108.90" width="139.8" height="8.20" fill="#a1511c"/><rect x="1229.56" y="1109.40" width="138.8" height="7.20" fill="none" stroke="#c35e1b" stroke-width="1"/><rect x="1229.06" y="1117.10" width="139.8" height="3.90" fill="#3f72a8"/><rect x="1229.06" y="1121.00" width="139.8" height="4.60" fill="#b898c8"/><rect x="1229.56" y="1121.50" width="138.8" height="3.60" fill="none" stroke="#dfb7f2" stroke-width="1"/><rect x="1229.06" y="1125.60" width="139.8" height="12.30" fill="#d48a94"/><rect x="1229.56" y="1126.10" width="138.8" height="11.30" fill="none" stroke="#ffa5b1" stroke-width="1"/><rect x="1229.06" y="1137.90" width="139.8" height="2.60" fill="#b8d0e8"/><rect x="1229.06" y="1140.50" width="139.8" height="2.60" fill="#e2dc90"/><rect x="1229.06" y="1143.10" width="139.8" height="64.30" fill="#a8c8a2"/><rect x="1229.56" y="1143.60" width="138.8" height="63.30" fill="none" stroke="#cbf3c2" stroke-width="1"/><rect x="1229.06" y="1207.40" width="139.8" height="6.50" fill="#7a3498"/><rect x="1229.56" y="1207.90" width="138.8" height="5.50" fill="none" stroke="#923ab6" stroke-width="1"/><rect x="1229.06" y="1213.90" width="139.8" height="7.10" fill="#a81828"/><rect x="1229.56" y="1214.40" width="138.8" height="6.10" fill="none" stroke="#cb172a" stroke-width="1"/><rect x="1229.06" y="1221.00" width="139.8" height="2.00" fill="#e06010"/><rect x="1229.06" y="1223.00" width="139.8" height="2.60" fill="#1a5cc0"/><rect x="1229.06" y="1225.60" width="139.8" height="4.50" fill="#c8a000"/><rect x="1229.56" y="1226.10" width="138.8" height="3.50" fill="none" stroke="#f3c100" stroke-width="1"/><rect x="1229.06" y="1230.10" width="139.8" height="1.30" fill="#3a7a30"/><rect x="1229.06" y="1231.40" width="139.8" height="17.60" fill="#9a68b8"/><rect x="1229.56" y="1231.90" width="138.8" height="16.60" fill="none" stroke="#ba7bde" stroke-width="1"/><rect x="1229.06" y="1249.00" width="139.8" height="9.00" fill="#c84050"/><rect x="1229.56" y="1249.50" width="138.8" height="8.00" fill="none" stroke="#f3495c" stroke-width="1"/><rect x="1229.06" y="1258.00" width="139.8" height="1.40" fill="#f08030"/><rect x="1229.06" y="1259.40" width="139.8" height="10.30" fill="#4f7ecb"/><rect x="1229.56" y="1259.90" width="138.8" height="9.30" fill="none" stroke="#5c96f6" stroke-width="1"/><rect x="1229.06" y="1269.70" width="139.8" height="2.60" fill="#e0c830"/><rect x="1229.06" y="1272.30" width="139.8" height="0.70" fill="#70b050"/><rect x="1373.52" y="975.00" width="139.8" height="1.60" fill="#68b4c8"/><rect x="1373.52" y="976.60" width="139.8" height="1.50" fill="#bd8f12"/><rect x="1373.52" y="978.10" width="139.8" height="2.80" fill="#568a4b"/><rect x="1373.52" y="980.90" width="139.8" height="1.80" fill="#c09ad6"/><rect x="1373.52" y="982.70" width="139.8" height="47.30" fill="#bc8abc"/><rect x="1374.02" y="983.20" width="138.8" height="46.30" fill="none" stroke="#e4a5e3" stroke-width="1"/><rect x="1373.52" y="1030.00" width="139.8" height="6.50" fill="#6f99b7"/><rect x="1374.02" y="1030.50" width="138.8" height="5.50" fill="none" stroke="#84b8dd" stroke-width="1"/><rect x="1373.52" y="1036.50" width="139.8" height="8.00" fill="#c87878"/><rect x="1374.02" y="1037.00" width="138.8" height="7.00" fill="none" stroke="#f38f8e" stroke-width="1"/><rect x="1373.52" y="1044.50" width="139.8" height="3.60" fill="#cf9c7b"/><rect x="1373.52" y="1048.10" width="139.8" height="5.90" fill="#62b8cb"/><rect x="1374.02" y="1048.60" width="138.8" height="4.90" fill="none" stroke="#74dff6" stroke-width="1"/><rect x="1373.52" y="1054.00" width="139.8" height="2.70" fill="#e0c890"/><rect x="1373.52" y="1056.70" width="139.8" height="2.40" fill="#a8c8a0"/><rect x="1373.52" y="1059.10" width="139.8" height="2.50" fill="#503868"/><rect x="1373.52" y="1061.60" width="139.8" height="3.60" fill="#5f1e58"/><rect x="1373.52" y="1065.20" width="139.8" height="4.90" fill="#0e3b6b"/><rect x="1374.02" y="1065.70" width="138.8" height="3.90" fill="none" stroke="#0b437d" stroke-width="1"/><rect x="1373.52" y="1070.10" width="139.8" height="9.80" fill="#7a1010"/><rect x="1374.02" y="1070.60" width="138.8" height="8.80" fill="none" stroke="#920d0c" stroke-width="1"/><rect x="1373.52" y="1079.90" width="139.8" height="9.50" fill="#a1511c"/><rect x="1374.02" y="1080.40" width="138.8" height="8.50" fill="none" stroke="#c35e1b" stroke-width="1"/><rect x="1373.52" y="1089.40" width="139.8" height="2.70" fill="#3f72a8"/><rect x="1373.52" y="1092.10" width="139.8" height="5.50" fill="#b898c8"/><rect x="1374.02" y="1092.60" width="138.8" height="4.50" fill="none" stroke="#dfb7f2" stroke-width="1"/><rect x="1373.52" y="1097.60" width="139.8" height="13.50" fill="#d48a94"/><rect x="1374.02" y="1098.10" width="138.8" height="12.50" fill="none" stroke="#ffa5b1" stroke-width="1"/><rect x="1373.52" y="1111.10" width="139.8" height="3.00" fill="#ecc090"/><rect x="1373.52" y="1114.10" width="139.8" height="1.90" fill="#b8d0e8"/><rect x="1373.52" y="1116.00" width="139.8" height="1.20" fill="#e2dc90"/><rect x="1373.52" y="1117.20" width="139.8" height="82.40" fill="#a8c8a2"/><rect x="1374.02" y="1117.70" width="138.8" height="81.40" fill="none" stroke="#cbf3c2" stroke-width="1"/><rect x="1373.52" y="1199.60" width="139.8" height="6.50" fill="#7a3498"/><rect x="1374.02" y="1200.10" width="138.8" height="5.50" fill="none" stroke="#923ab6" stroke-width="1"/><rect x="1373.52" y="1206.10" width="139.8" height="9.10" fill="#a81828"/><rect x="1374.02" y="1206.60" width="138.8" height="8.10" fill="none" stroke="#cb172a" stroke-width="1"/><rect x="1373.52" y="1215.20" width="139.8" height="1.30" fill="#e06010"/><rect x="1373.52" y="1216.50" width="139.8" height="1.50" fill="#1a5cc0"/><rect x="1373.52" y="1218.00" width="139.8" height="3.70" fill="#c8a000"/><rect x="1373.52" y="1221.70" width="139.8" height="1.30" fill="#3a7a30"/><rect x="1373.52" y="1223.00" width="139.8" height="26.20" fill="#9a68b8"/><rect x="1374.02" y="1223.50" width="138.8" height="25.20" fill="none" stroke="#ba7bde" stroke-width="1"/><rect x="1373.52" y="1249.20" width="139.8" height="8.80" fill="#c84050"/><rect x="1374.02" y="1249.70" width="138.8" height="7.80" fill="none" stroke="#f3495c" stroke-width="1"/><rect x="1373.52" y="1258.00" width="139.8" height="1.10" fill="#f08030"/><rect x="1373.52" y="1259.10" width="139.8" height="10.40" fill="#4f7ecb"/><rect x="1374.02" y="1259.60" width="138.8" height="9.40" fill="none" stroke="#5c96f6" stroke-width="1"/><rect x="1373.52" y="1269.50" width="139.8" height="2.20" fill="#e0c830"/><rect x="1373.52" y="1271.70" width="139.8" height="1.30" fill="#70b050"/><rect x="1517.98" y="1000.10" width="139.8" height="1.60" fill="#68b4c8"/><rect x="1517.98" y="1001.70" width="139.8" height="1.10" fill="#bd8f12"/><rect x="1517.98" y="1002.80" width="139.8" height="1.90" fill="#568a4b"/><rect x="1517.98" y="1004.70" width="139.8" height="55.80" fill="#bc8abc"/><rect x="1518.48" y="1005.20" width="138.8" height="54.80" fill="none" stroke="#e4a5e3" stroke-width="1"/><rect x="1517.98" y="1060.50" width="139.8" height="5.70" fill="#6f99b7"/><rect x="1518.48" y="1061.00" width="138.8" height="4.70" fill="none" stroke="#84b8dd" stroke-width="1"/><rect x="1517.98" y="1066.20" width="139.8" height="4.60" fill="#c87878"/><rect x="1518.48" y="1066.70" width="138.8" height="3.60" fill="none" stroke="#f38f8e" stroke-width="1"/><rect x="1517.98" y="1070.80" width="139.8" height="3.40" fill="#cf9c7b"/><rect x="1517.98" y="1074.20" width="139.8" height="4.90" fill="#62b8cb"/><rect x="1518.48" y="1074.70" width="138.8" height="3.90" fill="none" stroke="#74dff6" stroke-width="1"/><rect x="1517.98" y="1079.10" width="139.8" height="3.10" fill="#e0c890"/><rect x="1517.98" y="1082.20" width="139.8" height="2.90" fill="#5f1e58"/><rect x="1517.98" y="1085.10" width="139.8" height="1.70" fill="#0e3b6b"/><rect x="1517.98" y="1086.80" width="139.8" height="5.20" fill="#7a1010"/><rect x="1518.48" y="1087.30" width="138.8" height="4.20" fill="none" stroke="#920d0c" stroke-width="1"/><rect x="1517.98" y="1092.00" width="139.8" height="7.80" fill="#a1511c"/><rect x="1518.48" y="1092.50" width="138.8" height="6.80" fill="none" stroke="#c35e1b" stroke-width="1"/><rect x="1517.98" y="1099.80" width="139.8" height="2.30" fill="#3f72a8"/><rect x="1517.98" y="1102.10" width="139.8" height="4.80" fill="#b898c8"/><rect x="1518.48" y="1102.60" width="138.8" height="3.80" fill="none" stroke="#dfb7f2" stroke-width="1"/><rect x="1517.98" y="1106.90" width="139.8" height="5.10" fill="#d48a94"/><rect x="1518.48" y="1107.40" width="138.8" height="4.10" fill="none" stroke="#ffa5b1" stroke-width="1"/><rect x="1517.98" y="1112.00" width="139.8" height="1.80" fill="#ecc090"/><rect x="1517.98" y="1113.80" width="139.8" height="2.20" fill="#e2dc90"/><rect x="1517.98" y="1116.00" width="139.8" height="93.60" fill="#a8c8a2"/><rect x="1518.48" y="1116.50" width="138.8" height="92.60" fill="none" stroke="#cbf3c2" stroke-width="1"/><rect x="1517.98" y="1209.60" width="139.8" height="6.90" fill="#7a3498"/><rect x="1518.48" y="1210.10" width="138.8" height="5.90" fill="none" stroke="#923ab6" stroke-width="1"/><rect x="1517.98" y="1216.50" width="139.8" height="8.00" fill="#a81828"/><rect x="1518.48" y="1217.00" width="138.8" height="7.00" fill="none" stroke="#cb172a" stroke-width="1"/><rect x="1517.98" y="1224.50" width="139.8" height="0.80" fill="#e06010"/><rect x="1517.98" y="1225.30" width="139.8" height="0.70" fill="#1a5cc0"/><rect x="1517.98" y="1226.00" width="139.8" height="3.10" fill="#c8a000"/><rect x="1517.98" y="1229.10" width="139.8" height="0.80" fill="#3a7a30"/><rect x="1517.98" y="1229.90" width="139.8" height="22.10" fill="#9a68b8"/><rect x="1518.48" y="1230.40" width="138.8" height="21.10" fill="none" stroke="#ba7bde" stroke-width="1"/><rect x="1517.98" y="1252.00" width="139.8" height="5.80" fill="#c84050"/><rect x="1518.48" y="1252.50" width="138.8" height="4.80" fill="none" stroke="#f3495c" stroke-width="1"/><rect x="1517.98" y="1257.80" width="139.8" height="1.10" fill="#f08030"/><rect x="1517.98" y="1258.90" width="139.8" height="10.30" fill="#4f7ecb"/><rect x="1518.48" y="1259.40" width="138.8" height="9.30" fill="none" stroke="#5c96f6" stroke-width="1"/><rect x="1517.98" y="1269.20" width="139.8" height="2.90" fill="#e0c830"/><rect x="1517.98" y="1272.10" width="139.8" height="0.90" fill="#70b050"/><rect x="1662.44" y="1059.00" width="139.8" height="1.30" fill="#68b4c8"/><rect x="1662.44" y="1060.30" width="139.8" height="3.00" fill="#bd8f12"/><rect x="1662.44" y="1063.30" width="139.8" height="1.40" fill="#568a4b"/><rect x="1662.44" y="1064.70" width="139.8" height="1.60" fill="#c09ad6"/><rect x="1662.44" y="1066.30" width="139.8" height="38.70" fill="#bc8abc"/><rect x="1662.94" y="1066.80" width="138.8" height="37.70" fill="none" stroke="#e4a5e3" stroke-width="1"/><rect x="1662.44" y="1105.00" width="139.8" height="6.20" fill="#6f99b7"/><rect x="1662.94" y="1105.50" width="138.8" height="5.20" fill="none" stroke="#84b8dd" stroke-width="1"/><rect x="1662.44" y="1111.20" width="139.8" height="11.70" fill="#c87878"/><rect x="1662.94" y="1111.70" width="138.8" height="10.70" fill="none" stroke="#f38f8e" stroke-width="1"/><rect x="1662.44" y="1122.90" width="139.8" height="3.00" fill="#cf9c7b"/><rect x="1662.44" y="1125.90" width="139.8" height="5.00" fill="#62b8cb"/><rect x="1662.94" y="1126.40" width="138.8" height="4.00" fill="none" stroke="#74dff6" stroke-width="1"/><rect x="1662.44" y="1130.90" width="139.8" height="3.30" fill="#e0c890"/><rect x="1662.44" y="1134.20" width="139.8" height="2.40" fill="#5f1e58"/><rect x="1662.44" y="1136.60" width="139.8" height="9.20" fill="#0e3b6b"/><rect x="1662.94" y="1137.10" width="138.8" height="8.20" fill="none" stroke="#0b437d" stroke-width="1"/><rect x="1662.44" y="1145.80" width="139.8" height="2.10" fill="#7a1010"/><rect x="1662.44" y="1147.90" width="139.8" height="9.40" fill="#a1511c"/><rect x="1662.94" y="1148.40" width="138.8" height="8.40" fill="none" stroke="#c35e1b" stroke-width="1"/><rect x="1662.44" y="1157.30" width="139.8" height="3.60" fill="#3f72a8"/><rect x="1662.44" y="1160.90" width="139.8" height="6.40" fill="#b898c8"/><rect x="1662.94" y="1161.40" width="138.8" height="5.40" fill="none" stroke="#dfb7f2" stroke-width="1"/><rect x="1662.44" y="1167.30" width="139.8" height="4.60" fill="#d48a94"/><rect x="1662.94" y="1167.80" width="138.8" height="3.60" fill="none" stroke="#ffa5b1" stroke-width="1"/><rect x="1662.44" y="1171.90" width="139.8" height="0.90" fill="#b8d0e8"/><rect x="1662.44" y="1172.80" width="139.8" height="3.20" fill="#e2dc90"/><rect x="1662.44" y="1176.00" width="139.8" height="51.40" fill="#a8c8a2"/><rect x="1662.94" y="1176.50" width="138.8" height="50.40" fill="none" stroke="#cbf3c2" stroke-width="1"/><rect x="1662.44" y="1227.40" width="139.8" height="5.50" fill="#7a3498"/><rect x="1662.94" y="1227.90" width="138.8" height="4.50" fill="none" stroke="#923ab6" stroke-width="1"/><rect x="1662.44" y="1232.90" width="139.8" height="5.00" fill="#a81828"/><rect x="1662.94" y="1233.40" width="138.8" height="4.00" fill="none" stroke="#cb172a" stroke-width="1"/><rect x="1662.44" y="1237.90" width="139.8" height="1.90" fill="#e06010"/><rect x="1662.44" y="1239.80" width="139.8" height="2.20" fill="#1a5cc0"/><rect x="1662.44" y="1242.00" width="139.8" height="3.30" fill="#c8a000"/><rect x="1662.44" y="1245.30" width="139.8" height="1.60" fill="#3a7a30"/><rect x="1662.44" y="1246.90" width="139.8" height="11.90" fill="#9a68b8"/><rect x="1662.94" y="1247.40" width="138.8" height="10.90" fill="none" stroke="#ba7bde" stroke-width="1"/><rect x="1662.44" y="1258.80" width="139.8" height="3.00" fill="#c84050"/><rect x="1662.44" y="1261.80" width="139.8" height="1.30" fill="#f08030"/><rect x="1662.44" y="1263.10" width="139.8" height="7.40" fill="#4f7ecb"/><rect x="1662.94" y="1263.60" width="138.8" height="6.40" fill="none" stroke="#5c96f6" stroke-width="1"/><rect x="1662.44" y="1270.50" width="139.8" height="2.50" fill="#e0c830"/><rect x="1806.90" y="1021.10" width="139.8" height="1.70" fill="#68b4c8"/><rect x="1806.90" y="1022.80" width="139.8" height="11.10" fill="#bd8f12"/><rect x="1807.40" y="1023.30" width="138.8" height="10.10" fill="none" stroke="#e6ab0e" stroke-width="1"/><rect x="1806.90" y="1033.90" width="139.8" height="4.90" fill="#568a4b"/><rect x="1807.40" y="1034.40" width="138.8" height="3.90" fill="none" stroke="#65a555" stroke-width="1"/><rect x="1806.90" y="1038.80" width="139.8" height="1.20" fill="#c09ad6"/><rect x="1806.90" y="1040.00" width="139.8" height="42.60" fill="#bc8abc"/><rect x="1807.40" y="1040.50" width="138.8" height="41.60" fill="none" stroke="#e4a5e3" stroke-width="1"/><rect x="1806.90" y="1082.60" width="139.8" height="5.50" fill="#6f99b7"/><rect x="1807.40" y="1083.10" width="138.8" height="4.50" fill="none" stroke="#84b8dd" stroke-width="1"/><rect x="1806.90" y="1088.10" width="139.8" height="8.50" fill="#c87878"/><rect x="1807.40" y="1088.60" width="138.8" height="7.50" fill="none" stroke="#f38f8e" stroke-width="1"/><rect x="1806.90" y="1096.60" width="139.8" height="5.10" fill="#cf9c7b"/><rect x="1807.40" y="1097.10" width="138.8" height="4.10" fill="none" stroke="#fcbc92" stroke-width="1"/><rect x="1806.90" y="1101.70" width="139.8" height="4.70" fill="#62b8cb"/><rect x="1807.40" y="1102.20" width="138.8" height="3.70" fill="none" stroke="#74dff6" stroke-width="1"/><rect x="1806.90" y="1106.40" width="139.8" height="3.10" fill="#e0c890"/><rect x="1806.90" y="1109.50" width="139.8" height="1.50" fill="#5f1e58"/><rect x="1806.90" y="1111.00" width="139.8" height="24.80" fill="#0e3b6b"/><rect x="1807.40" y="1111.50" width="138.8" height="23.80" fill="none" stroke="#0b437d" stroke-width="1"/><rect x="1806.90" y="1135.80" width="139.8" height="3.10" fill="#7a1010"/><rect x="1806.90" y="1138.90" width="139.8" height="10.90" fill="#a1511c"/><rect x="1807.40" y="1139.40" width="138.8" height="9.90" fill="none" stroke="#c35e1b" stroke-width="1"/><rect x="1806.90" y="1149.80" width="139.8" height="3.00" fill="#3f72a8"/><rect x="1806.90" y="1152.80" width="139.8" height="6.50" fill="#b898c8"/><rect x="1807.40" y="1153.30" width="138.8" height="5.50" fill="none" stroke="#dfb7f2" stroke-width="1"/><rect x="1806.90" y="1159.30" width="139.8" height="5.80" fill="#d48a94"/><rect x="1807.40" y="1159.80" width="138.8" height="4.80" fill="none" stroke="#ffa5b1" stroke-width="1"/><rect x="1806.90" y="1165.10" width="139.8" height="1.10" fill="#b8d0e8"/><rect x="1806.90" y="1166.20" width="139.8" height="2.70" fill="#e2dc90"/><rect x="1806.90" y="1168.90" width="139.8" height="50.80" fill="#a8c8a2"/><rect x="1807.40" y="1169.40" width="138.8" height="49.80" fill="none" stroke="#cbf3c2" stroke-width="1"/><rect x="1806.90" y="1219.70" width="139.8" height="5.30" fill="#7a3498"/><rect x="1807.40" y="1220.20" width="138.8" height="4.30" fill="none" stroke="#923ab6" stroke-width="1"/><rect x="1806.90" y="1225.00" width="139.8" height="4.80" fill="#a81828"/><rect x="1807.40" y="1225.50" width="138.8" height="3.80" fill="none" stroke="#cb172a" stroke-width="1"/><rect x="1806.90" y="1229.80" width="139.8" height="3.80" fill="#e06010"/><rect x="1806.90" y="1233.60" width="139.8" height="2.10" fill="#1a5cc0"/><rect x="1806.90" y="1235.70" width="139.8" height="4.80" fill="#c8a000"/><rect x="1807.40" y="1236.20" width="138.8" height="3.80" fill="none" stroke="#f3c100" stroke-width="1"/><rect x="1806.90" y="1240.50" width="139.8" height="1.10" fill="#3a7a30"/><rect x="1806.90" y="1241.60" width="139.8" height="17.10" fill="#9a68b8"/><rect x="1807.40" y="1242.10" width="138.8" height="16.10" fill="none" stroke="#ba7bde" stroke-width="1"/><rect x="1806.90" y="1258.70" width="139.8" height="2.70" fill="#c84050"/><rect x="1806.90" y="1261.40" width="139.8" height="8.60" fill="#4f7ecb"/><rect x="1807.40" y="1261.90" width="138.8" height="7.60" fill="none" stroke="#5c96f6" stroke-width="1"/><rect x="1806.90" y="1270.00" width="139.8" height="2.00" fill="#e0c830"/><rect x="1806.90" y="1272.00" width="139.8" height="1.00" fill="#70b050"/><rect x="1951.36" y="952.20" width="139.8" height="1.70" fill="#68b4c8"/><rect x="1951.36" y="953.90" width="139.8" height="9.70" fill="#bd8f12"/><rect x="1951.86" y="954.40" width="138.8" height="8.70" fill="none" stroke="#e6ab0e" stroke-width="1"/><rect x="1951.36" y="963.60" width="139.8" height="4.10" fill="#568a4b"/><rect x="1951.86" y="964.10" width="138.8" height="3.10" fill="none" stroke="#65a555" stroke-width="1"/><rect x="1951.36" y="967.70" width="139.8" height="2.10" fill="#c09ad6"/><rect x="1951.36" y="969.80" width="139.8" height="143.80" fill="#bc8abc"/><rect x="1951.86" y="970.30" width="138.8" height="142.80" fill="none" stroke="#e4a5e3" stroke-width="1"/><rect x="1951.36" y="1113.60" width="139.8" height="1.60" fill="#6f99b7"/><rect x="1951.36" y="1115.20" width="139.8" height="5.80" fill="#c87878"/><rect x="1951.86" y="1115.70" width="138.8" height="4.80" fill="none" stroke="#f38f8e" stroke-width="1"/><rect x="1951.36" y="1121.00" width="139.8" height="4.80" fill="#cf9c7b"/><rect x="1951.86" y="1121.50" width="138.8" height="3.80" fill="none" stroke="#fcbc92" stroke-width="1"/><rect x="1951.36" y="1125.80" width="139.8" height="5.60" fill="#62b8cb"/><rect x="1951.86" y="1126.30" width="138.8" height="4.60" fill="none" stroke="#74dff6" stroke-width="1"/><rect x="1951.36" y="1131.40" width="139.8" height="2.60" fill="#e0c890"/><rect x="1951.36" y="1134.00" width="139.8" height="2.00" fill="#5f1e58"/><rect x="1951.36" y="1136.00" width="139.8" height="22.00" fill="#0e3b6b"/><rect x="1951.86" y="1136.50" width="138.8" height="21.00" fill="none" stroke="#0b437d" stroke-width="1"/><rect x="1951.36" y="1158.00" width="139.8" height="1.40" fill="#7a1010"/><rect x="1951.36" y="1159.40" width="139.8" height="8.40" fill="#a1511c"/><rect x="1951.86" y="1159.90" width="138.8" height="7.40" fill="none" stroke="#c35e1b" stroke-width="1"/><rect x="1951.36" y="1167.80" width="139.8" height="3.20" fill="#3f72a8"/><rect x="1951.36" y="1171.00" width="139.8" height="7.20" fill="#b898c8"/><rect x="1951.86" y="1171.50" width="138.8" height="6.20" fill="none" stroke="#dfb7f2" stroke-width="1"/><rect x="1951.36" y="1178.20" width="139.8" height="5.20" fill="#d48a94"/><rect x="1951.86" y="1178.70" width="138.8" height="4.20" fill="none" stroke="#ffa5b1" stroke-width="1"/><rect x="1951.36" y="1183.40" width="139.8" height="3.20" fill="#ecc090"/><rect x="1951.36" y="1186.60" width="139.8" height="1.30" fill="#b8d0e8"/><rect x="1951.36" y="1187.90" width="139.8" height="3.30" fill="#e2dc90"/><rect x="1951.36" y="1191.20" width="139.8" height="30.80" fill="#a8c8a2"/><rect x="1951.86" y="1191.70" width="138.8" height="29.80" fill="none" stroke="#cbf3c2" stroke-width="1"/><rect x="1951.36" y="1222.00" width="139.8" height="4.90" fill="#7a3498"/><rect x="1951.86" y="1222.50" width="138.8" height="3.90" fill="none" stroke="#923ab6" stroke-width="1"/><rect x="1951.36" y="1226.90" width="139.8" height="4.90" fill="#a81828"/><rect x="1951.86" y="1227.40" width="138.8" height="3.90" fill="none" stroke="#cb172a" stroke-width="1"/><rect x="1951.36" y="1231.80" width="139.8" height="3.10" fill="#e06010"/><rect x="1951.36" y="1234.90" width="139.8" height="1.70" fill="#1a5cc0"/><rect x="1951.36" y="1236.60" width="139.8" height="5.20" fill="#c8a000"/><rect x="1951.86" y="1237.10" width="138.8" height="4.20" fill="none" stroke="#f3c100" stroke-width="1"/><rect x="1951.36" y="1241.80" width="139.8" height="1.30" fill="#3a7a30"/><rect x="1951.36" y="1243.10" width="139.8" height="14.90" fill="#9a68b8"/><rect x="1951.86" y="1243.60" width="138.8" height="13.90" fill="none" stroke="#ba7bde" stroke-width="1"/><rect x="1951.36" y="1258.00" width="139.8" height="5.20" fill="#c84050"/><rect x="1951.86" y="1258.50" width="138.8" height="4.20" fill="none" stroke="#f3495c" stroke-width="1"/><rect x="1951.36" y="1263.20" width="139.8" height="7.80" fill="#4f7ecb"/><rect x="1951.86" y="1263.70" width="138.8" height="6.80" fill="none" stroke="#5c96f6" stroke-width="1"/><rect x="1951.36" y="1271.00" width="139.8" height="2.00" fill="#e0c830"/><rect x="2095.82" y="996.90" width="139.8" height="1.20" fill="#68b4c8"/><rect x="2095.82" y="998.10" width="139.8" height="9.40" fill="#bd8f12"/><rect x="2096.32" y="998.60" width="138.8" height="8.40" fill="none" stroke="#e6ab0e" stroke-width="1"/><rect x="2095.82" y="1007.50" width="139.8" height="1.70" fill="#568a4b"/><rect x="2095.82" y="1009.20" width="139.8" height="1.70" fill="#c09ad6"/><rect x="2095.82" y="1010.90" width="139.8" height="102.90" fill="#bc8abc"/><rect x="2096.32" y="1011.40" width="138.8" height="101.90" fill="none" stroke="#e4a5e3" stroke-width="1"/><rect x="2095.82" y="1113.80" width="139.8" height="1.20" fill="#6f99b7"/><rect x="2095.82" y="1115.00" width="139.8" height="4.50" fill="#c87878"/><rect x="2096.32" y="1115.50" width="138.8" height="3.50" fill="none" stroke="#f38f8e" stroke-width="1"/><rect x="2095.82" y="1119.50" width="139.8" height="4.90" fill="#cf9c7b"/><rect x="2096.32" y="1120.00" width="138.8" height="3.90" fill="none" stroke="#fcbc92" stroke-width="1"/><rect x="2095.82" y="1124.40" width="139.8" height="5.40" fill="#62b8cb"/><rect x="2096.32" y="1124.90" width="138.8" height="4.40" fill="none" stroke="#74dff6" stroke-width="1"/><rect x="2095.82" y="1129.80" width="139.8" height="2.10" fill="#e0c890"/><rect x="2095.82" y="1131.90" width="139.8" height="0.80" fill="#5f1e58"/><rect x="2095.82" y="1132.70" width="139.8" height="17.80" fill="#0e3b6b"/><rect x="2096.32" y="1133.20" width="138.8" height="16.80" fill="none" stroke="#0b437d" stroke-width="1"/><rect x="2095.82" y="1150.50" width="139.8" height="2.30" fill="#7a1010"/><rect x="2095.82" y="1152.80" width="139.8" height="7.10" fill="#a1511c"/><rect x="2096.32" y="1153.30" width="138.8" height="6.10" fill="none" stroke="#c35e1b" stroke-width="1"/><rect x="2095.82" y="1159.90" width="139.8" height="3.60" fill="#3f72a8"/><rect x="2095.82" y="1163.50" width="139.8" height="5.50" fill="#b898c8"/><rect x="2096.32" y="1164.00" width="138.8" height="4.50" fill="none" stroke="#dfb7f2" stroke-width="1"/><rect x="2095.82" y="1169.00" width="139.8" height="6.30" fill="#d48a94"/><rect x="2096.32" y="1169.50" width="138.8" height="5.30" fill="none" stroke="#ffa5b1" stroke-width="1"/><rect x="2095.82" y="1175.30" width="139.8" height="2.40" fill="#ecc090"/><rect x="2095.82" y="1177.70" width="139.8" height="1.80" fill="#e2dc90"/><rect x="2095.82" y="1179.50" width="139.8" height="47.90" fill="#a8c8a2"/><rect x="2096.32" y="1180.00" width="138.8" height="46.90" fill="none" stroke="#cbf3c2" stroke-width="1"/><rect x="2095.82" y="1227.40" width="139.8" height="4.20" fill="#7a3498"/><rect x="2096.32" y="1227.90" width="138.8" height="3.20" fill="none" stroke="#923ab6" stroke-width="1"/><rect x="2095.82" y="1231.60" width="139.8" height="4.70" fill="#a81828"/><rect x="2096.32" y="1232.10" width="138.8" height="3.70" fill="none" stroke="#cb172a" stroke-width="1"/><rect x="2095.82" y="1236.30" width="139.8" height="2.60" fill="#e06010"/><rect x="2095.82" y="1238.90" width="139.8" height="1.90" fill="#1a5cc0"/><rect x="2095.82" y="1240.80" width="139.8" height="3.20" fill="#c8a000"/><rect x="2095.82" y="1244.00" width="139.8" height="1.50" fill="#3a7a30"/><rect x="2095.82" y="1245.50" width="139.8" height="18.00" fill="#9a68b8"/><rect x="2096.32" y="1246.00" width="138.8" height="17.00" fill="none" stroke="#ba7bde" stroke-width="1"/><rect x="2095.82" y="1263.50" width="139.8" height="3.00" fill="#c84050"/><rect x="2095.82" y="1266.50" width="139.8" height="4.10" fill="#4f7ecb"/><rect x="2096.32" y="1267.00" width="138.8" height="3.10" fill="none" stroke="#5c96f6" stroke-width="1"/><rect x="2095.82" y="1270.60" width="139.8" height="2.40" fill="#e0c830"/><rect x="2240.28" y="1024.10" width="139.8" height="1.00" fill="#68b4c8"/><rect x="2240.28" y="1025.10" width="139.8" height="8.30" fill="#bd8f12"/><rect x="2240.78" y="1025.60" width="138.8" height="7.30" fill="none" stroke="#e6ab0e" stroke-width="1"/><rect x="2240.28" y="1033.40" width="139.8" height="3.50" fill="#568a4b"/><rect x="2240.28" y="1036.90" width="139.8" height="2.00" fill="#c09ad6"/><rect x="2240.28" y="1038.90" width="139.8" height="110.70" fill="#bc8abc"/><rect x="2240.78" y="1039.40" width="138.8" height="109.70" fill="none" stroke="#e4a5e3" stroke-width="1"/><rect x="2240.28" y="1149.60" width="139.8" height="7.00" fill="#c87878"/><rect x="2240.78" y="1150.10" width="138.8" height="6.00" fill="none" stroke="#f38f8e" stroke-width="1"/><rect x="2240.28" y="1156.60" width="139.8" height="3.70" fill="#62b8cb"/><rect x="2240.28" y="1160.30" width="139.8" height="2.70" fill="#e0c890"/><rect x="2240.28" y="1163.00" width="139.8" height="2.10" fill="#5f1e58"/><rect x="2240.28" y="1165.10" width="139.8" height="3.20" fill="#0e3b6b"/><rect x="2240.28" y="1168.30" width="139.8" height="3.80" fill="#7a1010"/><rect x="2240.28" y="1172.10" width="139.8" height="5.90" fill="#a1511c"/><rect x="2240.78" y="1172.60" width="138.8" height="4.90" fill="none" stroke="#c35e1b" stroke-width="1"/><rect x="2240.28" y="1178.00" width="139.8" height="4.80" fill="#3f72a8"/><rect x="2240.78" y="1178.50" width="138.8" height="3.80" fill="none" stroke="#4887ca" stroke-width="1"/><rect x="2240.28" y="1182.80" width="139.8" height="4.30" fill="#b898c8"/><rect x="2240.78" y="1183.30" width="138.8" height="3.30" fill="none" stroke="#dfb7f2" stroke-width="1"/><rect x="2240.28" y="1187.10" width="139.8" height="3.70" fill="#d48a94"/><rect x="2240.28" y="1190.80" width="139.8" height="3.20" fill="#e2dc90"/><rect x="2240.28" y="1194.00" width="139.8" height="58.10" fill="#a8c8a2"/><rect x="2240.78" y="1194.50" width="138.8" height="57.10" fill="none" stroke="#cbf3c2" stroke-width="1"/><rect x="2240.28" y="1252.10" width="139.8" height="2.60" fill="#7a3498"/><rect x="2240.28" y="1254.70" width="139.8" height="2.90" fill="#a81828"/><rect x="2240.28" y="1257.60" width="139.8" height="2.20" fill="#e06010"/><rect x="2240.28" y="1259.80" width="139.8" height="1.60" fill="#1a5cc0"/><rect x="2240.28" y="1261.40" width="139.8" height="2.70" fill="#c8a000"/><rect x="2240.28" y="1264.10" width="139.8" height="1.20" fill="#3a7a30"/><rect x="2240.28" y="1265.30" width="139.8" height="2.50" fill="#c84050"/><rect x="2240.28" y="1267.80" width="139.8" height="3.80" fill="#4f7ecb"/><rect x="2240.28" y="1271.60" width="139.8" height="1.40" fill="#e0c830"/><rect x="2384.74" y="1028.00" width="139.8" height="2.20" fill="#68b4c8"/><rect x="2384.74" y="1030.20" width="139.8" height="11.00" fill="#bd8f12"/><rect x="2385.24" y="1030.70" width="138.8" height="10.00" fill="none" stroke="#e6ab0e" stroke-width="1"/><rect x="2384.74" y="1041.20" width="139.8" height="8.20" fill="#568a4b"/><rect x="2385.24" y="1041.70" width="138.8" height="7.20" fill="none" stroke="#65a555" stroke-width="1"/><rect x="2384.74" y="1049.40" width="139.8" height="3.20" fill="#9a88c8"/><rect x="2384.74" y="1052.60" width="139.8" height="77.00" fill="#bc8abc"/><rect x="2385.24" y="1053.10" width="138.8" height="76.00" fill="none" stroke="#e4a5e3" stroke-width="1"/><rect x="2384.74" y="1129.60" width="139.8" height="2.50" fill="#6f99b7"/><rect x="2384.74" y="1132.10" width="139.8" height="6.40" fill="#c87878"/><rect x="2385.24" y="1132.60" width="138.8" height="5.40" fill="none" stroke="#f38f8e" stroke-width="1"/><rect x="2384.74" y="1138.50" width="139.8" height="3.40" fill="#cf9c7b"/><rect x="2384.74" y="1141.90" width="139.8" height="4.80" fill="#62b8cb"/><rect x="2385.24" y="1142.40" width="138.8" height="3.80" fill="none" stroke="#74dff6" stroke-width="1"/><rect x="2384.74" y="1146.70" width="139.8" height="3.30" fill="#e0c890"/><rect x="2384.74" y="1150.00" width="139.8" height="1.80" fill="#5f1e58"/><rect x="2384.74" y="1151.80" width="139.8" height="7.30" fill="#0e3b6b"/><rect x="2385.24" y="1152.30" width="138.8" height="6.30" fill="none" stroke="#0b437d" stroke-width="1"/><rect x="2384.74" y="1159.10" width="139.8" height="3.60" fill="#7a1010"/><rect x="2384.74" y="1162.70" width="139.8" height="6.40" fill="#a1511c"/><rect x="2385.24" y="1163.20" width="138.8" height="5.40" fill="none" stroke="#c35e1b" stroke-width="1"/><rect x="2384.74" y="1169.10" width="139.8" height="4.70" fill="#3f72a8"/><rect x="2385.24" y="1169.60" width="138.8" height="3.70" fill="none" stroke="#4887ca" stroke-width="1"/><rect x="2384.74" y="1173.80" width="139.8" height="2.80" fill="#b898c8"/><rect x="2384.74" y="1176.60" width="139.8" height="4.70" fill="#d48a94"/><rect x="2385.24" y="1177.10" width="138.8" height="3.70" fill="none" stroke="#ffa5b1" stroke-width="1"/><rect x="2384.74" y="1181.30" width="139.8" height="3.70" fill="#e2dc90"/><rect x="2384.74" y="1185.00" width="139.8" height="55.90" fill="#a8c8a2"/><rect x="2385.24" y="1185.50" width="138.8" height="54.90" fill="none" stroke="#cbf3c2" stroke-width="1"/><rect x="2384.74" y="1240.90" width="139.8" height="1.50" fill="#7a3498"/><rect x="2384.74" y="1242.40" width="139.8" height="1.70" fill="#a81828"/><rect x="2384.74" y="1244.10" width="139.8" height="2.00" fill="#1a5cc0"/><rect x="2384.74" y="1246.10" width="139.8" height="4.20" fill="#c8a000"/><rect x="2385.24" y="1246.60" width="138.8" height="3.20" fill="none" stroke="#f3c100" stroke-width="1"/><rect x="2384.74" y="1250.30" width="139.8" height="0.80" fill="#3a7a30"/><rect x="2384.74" y="1251.10" width="139.8" height="12.60" fill="#9a68b8"/><rect x="2385.24" y="1251.60" width="138.8" height="11.60" fill="none" stroke="#ba7bde" stroke-width="1"/><rect x="2384.74" y="1263.70" width="139.8" height="3.00" fill="#c84050"/><rect x="2384.74" y="1266.70" width="139.8" height="1.50" fill="#f08030"/><rect x="2384.74" y="1268.20" width="139.8" height="3.80" fill="#4f7ecb"/><rect x="2384.74" y="1272.00" width="139.8" height="1.00" fill="#e0c830"/></svg><svg class="a" style="left:0;top:0;overflow:visible" width="1" height="1"><rect x="359" y="920" width="2166" height="1" fill="rgba(204,204,220,0.05)"/><rect x="359" y="952" width="2166" height="1" fill="rgba(204,204,220,0.05)"/><rect x="359" y="985" width="2166" height="1" fill="rgba(204,204,220,0.05)"/><rect x="359" y="1017" width="2166" height="1" fill="rgba(204,204,220,0.05)"/><rect x="359" y="1049" width="2166" height="1" fill="rgba(204,204,220,0.05)"/><rect x="359" y="1081" width="2166" height="1" fill="rgba(204,204,220,0.05)"/><rect x="359" y="1113" width="2166" height="1" fill="rgba(204,204,220,0.05)"/><rect x="359" y="1145" width="2166" height="1" fill="rgba(204,204,220,0.05)"/><rect x="359" y="1177" width="2166" height="1" fill="rgba(204,204,220,0.05)"/><rect x="359" y="1209" width="2166" height="1" fill="rgba(204,204,220,0.05)"/><rect x="359" y="1241" width="2166" height="1" fill="rgba(204,204,220,0.05)"/></svg><div class="a" style="left:0px;top:1305px;width:2552px;height:1px;background:#34373d"></div>
</body></html>
